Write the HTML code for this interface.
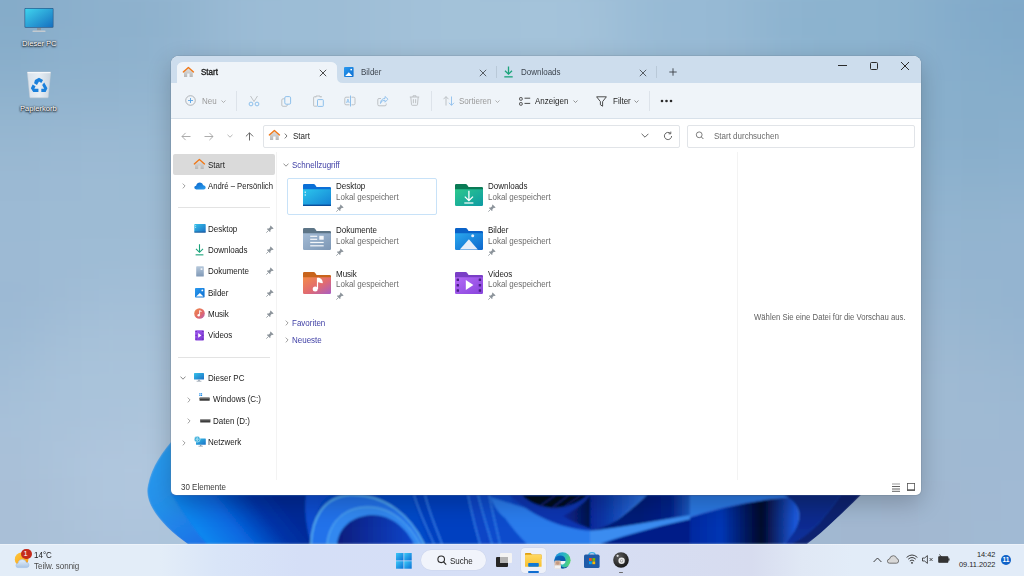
<!DOCTYPE html>
<html><head><meta charset="utf-8">
<style>
*{margin:0;padding:0;box-sizing:border-box}
html,body{width:1024px;height:576px;overflow:hidden}
body{position:relative;font-family:"Liberation Sans",sans-serif;color:#1b1b1b;font-size:8.6px;
background:
 radial-gradient(ellipse 420px 300px at 560px 80px, rgba(178,203,224,0.9), rgba(178,203,224,0) 100%),
 radial-gradient(ellipse 380px 420px at 1024px 560px, rgba(186,204,224,0.9), rgba(186,204,224,0) 100%),
 linear-gradient(90deg,#90b0cc 0%,#9fbcd5 45%,#8fb0cd 75%,#82a7c6 100%);}
.a{position:absolute}
.t{position:absolute;white-space:nowrap;line-height:1;transform:scaleX(0.93);transform-origin:0 0}
#bloom{position:absolute;left:0;top:0}
.win{position:absolute;left:171px;top:56px;width:750px;height:439px;border-radius:8px 8px 5px 5px;overflow:hidden;background:#fff;
 box-shadow:0 8px 24px rgba(0,0,0,0.22),0 0 0 1px rgba(120,140,160,0.25)}
.tabs{position:absolute;left:0;top:0;width:750px;height:27px;background:#cddded}
.tab{position:absolute;left:6px;top:5.5px;width:160px;height:21px;background:#eff4f9;border-radius:6px 6px 0 0}
.toolbar{position:absolute;left:0;top:27px;width:750px;height:36px;background:#eff4f9;border-bottom:1px solid #d8e1ea}
.sep{position:absolute;width:1px;background:#dde3ea}
.box{position:absolute;border:1px solid #e1e4e8;background:#fff;border-radius:2px}

.taskbar{position:absolute;left:0;top:544px;width:1024px;height:32px;background:linear-gradient(90deg,#e3edf8 0px,#e3edf8 160px,#d9e5f8 217px,#d5dff7 300px,#d6dff6 500px,#d7dcef 752px,#e0e8f5 802px,#e2ecf8 852px,#e2ecf8 1024px);border-top:1px solid rgba(255,255,255,0.35)}
.dlabel{color:#fff;transform:none!important;text-shadow:0 0 2px #000,0 1px 2px #000}
</style></head><body>

<!-- bgmesh --><div class="a" style="left:-80px;top:-80px;width:1184px;height:736px;filter:blur(20px)"><svg width="1184" height="736"><rect x="0" y="0" width="41" height="41" fill="#8aafcc"/><rect x="40" y="0" width="41" height="41" fill="#88aecb"/><rect x="80" y="0" width="41" height="41" fill="#88aecb"/><rect x="120" y="0" width="41" height="41" fill="#8bb0cc"/><rect x="160" y="0" width="41" height="41" fill="#8eb2ce"/><rect x="200" y="0" width="41" height="41" fill="#91b4cf"/><rect x="240" y="0" width="41" height="41" fill="#94b6d1"/><rect x="280" y="0" width="41" height="41" fill="#97b9d3"/><rect x="320" y="0" width="41" height="41" fill="#9abbd5"/><rect x="360" y="0" width="41" height="41" fill="#9cbcd5"/><rect x="400" y="0" width="41" height="41" fill="#9dbdd6"/><rect x="440" y="0" width="41" height="41" fill="#9fbfd7"/><rect x="480" y="0" width="41" height="41" fill="#a1c0d8"/><rect x="520" y="0" width="41" height="41" fill="#a1c1d8"/><rect x="560" y="0" width="41" height="41" fill="#a1c0d8"/><rect x="600" y="0" width="41" height="41" fill="#a1c0d8"/><rect x="640" y="0" width="41" height="41" fill="#9fbfd8"/><rect x="680" y="0" width="41" height="41" fill="#9cbdd6"/><rect x="720" y="0" width="41" height="41" fill="#99bbd5"/><rect x="760" y="0" width="41" height="41" fill="#97bad5"/><rect x="800" y="0" width="41" height="41" fill="#95b9d3"/><rect x="840" y="0" width="41" height="41" fill="#92b6d2"/><rect x="880" y="0" width="41" height="41" fill="#8fb5d0"/><rect x="920" y="0" width="41" height="41" fill="#8eb4d0"/><rect x="960" y="0" width="41" height="41" fill="#8cb2cf"/><rect x="1000" y="0" width="41" height="41" fill="#89b0cd"/><rect x="1040" y="0" width="41" height="41" fill="#86adcc"/><rect x="1080" y="0" width="41" height="41" fill="#84accb"/><rect x="1120" y="0" width="41" height="41" fill="#85adcb"/><rect x="1160" y="0" width="41" height="41" fill="#86aecc"/><rect x="0" y="40" width="41" height="41" fill="#88aecb"/><rect x="40" y="40" width="41" height="41" fill="#85acca"/><rect x="80" y="40" width="41" height="41" fill="#85acc9"/><rect x="120" y="40" width="41" height="41" fill="#89aecb"/><rect x="160" y="40" width="41" height="41" fill="#8db1cd"/><rect x="200" y="40" width="41" height="41" fill="#8fb2ce"/><rect x="240" y="40" width="41" height="41" fill="#92b5d0"/><rect x="280" y="40" width="41" height="41" fill="#97b9d3"/><rect x="320" y="40" width="41" height="41" fill="#9bbcd5"/><rect x="360" y="40" width="41" height="41" fill="#9cbdd6"/><rect x="400" y="40" width="41" height="41" fill="#9dbdd6"/><rect x="440" y="40" width="41" height="41" fill="#a0bfd7"/><rect x="480" y="40" width="41" height="41" fill="#a2c1d9"/><rect x="520" y="40" width="41" height="41" fill="#a3c2d9"/><rect x="560" y="40" width="41" height="41" fill="#a2c1d9"/><rect x="600" y="40" width="41" height="41" fill="#a3c2d9"/><rect x="640" y="40" width="41" height="41" fill="#a2c1d9"/><rect x="680" y="40" width="41" height="41" fill="#9dbdd7"/><rect x="720" y="40" width="41" height="41" fill="#98bad5"/><rect x="760" y="40" width="41" height="41" fill="#97bad5"/><rect x="800" y="40" width="41" height="41" fill="#95b9d4"/><rect x="840" y="40" width="41" height="41" fill="#90b5d1"/><rect x="880" y="40" width="41" height="41" fill="#8db4d0"/><rect x="920" y="40" width="41" height="41" fill="#8cb3cf"/><rect x="960" y="40" width="41" height="41" fill="#8bb2ce"/><rect x="1000" y="40" width="41" height="41" fill="#87aecc"/><rect x="1040" y="40" width="41" height="41" fill="#82abca"/><rect x="1080" y="40" width="41" height="41" fill="#81aaca"/><rect x="1120" y="40" width="41" height="41" fill="#82abca"/><rect x="1160" y="40" width="41" height="41" fill="#85accb"/><rect x="0" y="80" width="41" height="41" fill="#88aecb"/><rect x="40" y="80" width="41" height="41" fill="#85acc9"/><rect x="80" y="80" width="41" height="41" fill="#84abc9"/><rect x="120" y="80" width="41" height="41" fill="#8aafcc"/><rect x="160" y="80" width="41" height="41" fill="#8db1cd"/><rect x="200" y="80" width="41" height="41" fill="#8db1cd"/><rect x="240" y="80" width="41" height="41" fill="#91b4cf"/><rect x="280" y="80" width="41" height="41" fill="#98b9d3"/><rect x="320" y="80" width="41" height="41" fill="#9cbcd6"/><rect x="360" y="80" width="41" height="41" fill="#9cbdd6"/><rect x="400" y="80" width="41" height="41" fill="#9dbdd6"/><rect x="440" y="80" width="41" height="41" fill="#a0bfd7"/><rect x="480" y="80" width="41" height="41" fill="#a2c1d9"/><rect x="520" y="80" width="41" height="41" fill="#a3c2d9"/><rect x="560" y="80" width="41" height="41" fill="#a3c2d9"/><rect x="600" y="80" width="41" height="41" fill="#a4c3da"/><rect x="640" y="80" width="41" height="41" fill="#a4c3da"/><rect x="680" y="80" width="41" height="41" fill="#9dbed7"/><rect x="720" y="80" width="41" height="41" fill="#97bad5"/><rect x="760" y="80" width="41" height="41" fill="#97bad5"/><rect x="800" y="80" width="41" height="41" fill="#95b8d3"/><rect x="840" y="80" width="41" height="41" fill="#8eb4d0"/><rect x="880" y="80" width="41" height="41" fill="#8bb3cf"/><rect x="920" y="80" width="41" height="41" fill="#8cb3cf"/><rect x="960" y="80" width="41" height="41" fill="#8bb2ce"/><rect x="1000" y="80" width="41" height="41" fill="#86aecc"/><rect x="1040" y="80" width="41" height="41" fill="#81aaca"/><rect x="1080" y="80" width="41" height="41" fill="#7fa9c9"/><rect x="1120" y="80" width="41" height="41" fill="#81aaca"/><rect x="1160" y="80" width="41" height="41" fill="#84accb"/><rect x="0" y="120" width="41" height="41" fill="#8bb0cc"/><rect x="40" y="120" width="41" height="41" fill="#88aecb"/><rect x="80" y="120" width="41" height="41" fill="#89aecb"/><rect x="120" y="120" width="41" height="41" fill="#8db1cd"/><rect x="160" y="120" width="41" height="41" fill="#8eb1cd"/><rect x="200" y="120" width="41" height="41" fill="#8eb2ce"/><rect x="240" y="120" width="41" height="41" fill="#92b4d0"/><rect x="280" y="120" width="41" height="41" fill="#98b9d3"/><rect x="320" y="120" width="41" height="41" fill="#9bbcd5"/><rect x="360" y="120" width="41" height="41" fill="#9cbdd6"/><rect x="400" y="120" width="41" height="41" fill="#9dbdd6"/><rect x="440" y="120" width="41" height="41" fill="#a0bfd7"/><rect x="480" y="120" width="41" height="41" fill="#a2c0d8"/><rect x="520" y="120" width="41" height="41" fill="#a2c1d8"/><rect x="560" y="120" width="41" height="41" fill="#a2c1d9"/><rect x="600" y="120" width="41" height="41" fill="#a3c2d9"/><rect x="640" y="120" width="41" height="41" fill="#a2c1d9"/><rect x="680" y="120" width="41" height="41" fill="#9ebed7"/><rect x="720" y="120" width="41" height="41" fill="#99bbd5"/><rect x="760" y="120" width="41" height="41" fill="#98bad5"/><rect x="800" y="120" width="41" height="41" fill="#96b8d3"/><rect x="840" y="120" width="41" height="41" fill="#8fb5d1"/><rect x="880" y="120" width="41" height="41" fill="#8cb3cf"/><rect x="920" y="120" width="41" height="41" fill="#8cb3cf"/><rect x="960" y="120" width="41" height="41" fill="#8bb1ce"/><rect x="1000" y="120" width="41" height="41" fill="#87aecc"/><rect x="1040" y="120" width="41" height="41" fill="#85adcb"/><rect x="1080" y="120" width="41" height="41" fill="#82abca"/><rect x="1120" y="120" width="41" height="41" fill="#83abca"/><rect x="1160" y="120" width="41" height="41" fill="#86adcb"/><rect x="0" y="160" width="41" height="41" fill="#90b3cf"/><rect x="40" y="160" width="41" height="41" fill="#8fb2ce"/><rect x="80" y="160" width="41" height="41" fill="#90b3ce"/><rect x="120" y="160" width="41" height="41" fill="#92b4cf"/><rect x="160" y="160" width="41" height="41" fill="#92b4cf"/><rect x="200" y="160" width="41" height="41" fill="#93b5d0"/><rect x="240" y="160" width="41" height="41" fill="#95b7d1"/><rect x="280" y="160" width="41" height="41" fill="#99b9d3"/><rect x="320" y="160" width="41" height="41" fill="#9cbcd5"/><rect x="360" y="160" width="41" height="41" fill="#9dbdd6"/><rect x="400" y="160" width="41" height="41" fill="#9fbed6"/><rect x="440" y="160" width="41" height="41" fill="#a1bfd7"/><rect x="480" y="160" width="41" height="41" fill="#a1bfd7"/><rect x="520" y="160" width="41" height="41" fill="#a1c0d8"/><rect x="560" y="160" width="41" height="41" fill="#a2c0d8"/><rect x="600" y="160" width="41" height="41" fill="#a1c0d8"/><rect x="640" y="160" width="41" height="41" fill="#a0bfd8"/><rect x="680" y="160" width="41" height="41" fill="#9ebdd6"/><rect x="720" y="160" width="41" height="41" fill="#9bbbd5"/><rect x="760" y="160" width="41" height="41" fill="#9bbad4"/><rect x="800" y="160" width="41" height="41" fill="#99b9d4"/><rect x="840" y="160" width="41" height="41" fill="#94b7d2"/><rect x="880" y="160" width="41" height="41" fill="#90b5d0"/><rect x="920" y="160" width="41" height="41" fill="#8eb4cf"/><rect x="960" y="160" width="41" height="41" fill="#8bb1ce"/><rect x="1000" y="160" width="41" height="41" fill="#88afcc"/><rect x="1040" y="160" width="41" height="41" fill="#87aecb"/><rect x="1080" y="160" width="41" height="41" fill="#87aecb"/><rect x="1120" y="160" width="41" height="41" fill="#87aecb"/><rect x="1160" y="160" width="41" height="41" fill="#88afcc"/><rect x="0" y="200" width="41" height="41" fill="#96b6d1"/><rect x="40" y="200" width="41" height="41" fill="#96b6d1"/><rect x="80" y="200" width="41" height="41" fill="#97b7d1"/><rect x="120" y="200" width="41" height="41" fill="#99b8d2"/><rect x="160" y="200" width="41" height="41" fill="#9ab9d3"/><rect x="200" y="200" width="41" height="41" fill="#99b9d3"/><rect x="240" y="200" width="41" height="41" fill="#99b9d3"/><rect x="280" y="200" width="41" height="41" fill="#9bbad4"/><rect x="320" y="200" width="41" height="41" fill="#9dbcd5"/><rect x="360" y="200" width="41" height="41" fill="#9ebdd6"/><rect x="400" y="200" width="41" height="41" fill="#a1bed7"/><rect x="440" y="200" width="41" height="41" fill="#a2bfd7"/><rect x="480" y="200" width="41" height="41" fill="#a2bfd7"/><rect x="520" y="200" width="41" height="41" fill="#a2bfd7"/><rect x="560" y="200" width="41" height="41" fill="#a2bfd8"/><rect x="600" y="200" width="41" height="41" fill="#a2bfd8"/><rect x="640" y="200" width="41" height="41" fill="#a0bed7"/><rect x="680" y="200" width="41" height="41" fill="#9ebcd6"/><rect x="720" y="200" width="41" height="41" fill="#9cbad4"/><rect x="760" y="200" width="41" height="41" fill="#9cbad4"/><rect x="800" y="200" width="41" height="41" fill="#9bbad4"/><rect x="840" y="200" width="41" height="41" fill="#98b8d3"/><rect x="880" y="200" width="41" height="41" fill="#94b6d1"/><rect x="920" y="200" width="41" height="41" fill="#91b4d0"/><rect x="960" y="200" width="41" height="41" fill="#8db2ce"/><rect x="1000" y="200" width="41" height="41" fill="#89afcc"/><rect x="1040" y="200" width="41" height="41" fill="#88aecb"/><rect x="1080" y="200" width="41" height="41" fill="#89afcc"/><rect x="1120" y="200" width="41" height="41" fill="#8aafcc"/><rect x="1160" y="200" width="41" height="41" fill="#8cb0cd"/><rect x="0" y="240" width="41" height="41" fill="#9ab8d3"/><rect x="40" y="240" width="41" height="41" fill="#9ab9d3"/><rect x="80" y="240" width="41" height="41" fill="#9bb9d3"/><rect x="120" y="240" width="41" height="41" fill="#9cbad4"/><rect x="160" y="240" width="41" height="41" fill="#9dbbd4"/><rect x="200" y="240" width="41" height="41" fill="#9cbbd4"/><rect x="240" y="240" width="41" height="41" fill="#9cbbd4"/><rect x="280" y="240" width="41" height="41" fill="#9cbbd4"/><rect x="320" y="240" width="41" height="41" fill="#9ebcd5"/><rect x="360" y="240" width="41" height="41" fill="#9fbdd6"/><rect x="400" y="240" width="41" height="41" fill="#a1bed7"/><rect x="440" y="240" width="41" height="41" fill="#a2bfd7"/><rect x="480" y="240" width="41" height="41" fill="#a2bfd7"/><rect x="520" y="240" width="41" height="41" fill="#a2bfd7"/><rect x="560" y="240" width="41" height="41" fill="#a3c0d8"/><rect x="600" y="240" width="41" height="41" fill="#a4c0d8"/><rect x="640" y="240" width="41" height="41" fill="#a3c0d8"/><rect x="680" y="240" width="41" height="41" fill="#a0bdd6"/><rect x="720" y="240" width="41" height="41" fill="#9dbbd5"/><rect x="760" y="240" width="41" height="41" fill="#9cbad4"/><rect x="800" y="240" width="41" height="41" fill="#9bbad4"/><rect x="840" y="240" width="41" height="41" fill="#99b9d3"/><rect x="880" y="240" width="41" height="41" fill="#96b7d2"/><rect x="920" y="240" width="41" height="41" fill="#93b5d1"/><rect x="960" y="240" width="41" height="41" fill="#90b3cf"/><rect x="1000" y="240" width="41" height="41" fill="#8eb2ce"/><rect x="1040" y="240" width="41" height="41" fill="#8db1cd"/><rect x="1080" y="240" width="41" height="41" fill="#8db1ce"/><rect x="1120" y="240" width="41" height="41" fill="#8eb2ce"/><rect x="1160" y="240" width="41" height="41" fill="#8fb2ce"/><rect x="0" y="280" width="41" height="41" fill="#9cbad4"/><rect x="40" y="280" width="41" height="41" fill="#9cbad4"/><rect x="80" y="280" width="41" height="41" fill="#9cbad4"/><rect x="120" y="280" width="41" height="41" fill="#9dbbd4"/><rect x="160" y="280" width="41" height="41" fill="#9dbbd4"/><rect x="200" y="280" width="41" height="41" fill="#9dbbd4"/><rect x="240" y="280" width="41" height="41" fill="#9dbbd4"/><rect x="280" y="280" width="41" height="41" fill="#9ebcd5"/><rect x="320" y="280" width="41" height="41" fill="#9fbdd6"/><rect x="360" y="280" width="41" height="41" fill="#a0bed6"/><rect x="400" y="280" width="41" height="41" fill="#a1bed7"/><rect x="440" y="280" width="41" height="41" fill="#a2bfd7"/><rect x="480" y="280" width="41" height="41" fill="#a2bfd7"/><rect x="520" y="280" width="41" height="41" fill="#a3bfd8"/><rect x="560" y="280" width="41" height="41" fill="#a5c1d9"/><rect x="600" y="280" width="41" height="41" fill="#a7c2da"/><rect x="640" y="280" width="41" height="41" fill="#a7c1da"/><rect x="680" y="280" width="41" height="41" fill="#a4bfd8"/><rect x="720" y="280" width="41" height="41" fill="#9fbdd6"/><rect x="760" y="280" width="41" height="41" fill="#9dbbd5"/><rect x="800" y="280" width="41" height="41" fill="#9cbad4"/><rect x="840" y="280" width="41" height="41" fill="#9ab9d3"/><rect x="880" y="280" width="41" height="41" fill="#98b8d2"/><rect x="920" y="280" width="41" height="41" fill="#96b6d1"/><rect x="960" y="280" width="41" height="41" fill="#94b5d0"/><rect x="1000" y="280" width="41" height="41" fill="#92b4d0"/><rect x="1040" y="280" width="41" height="41" fill="#92b4cf"/><rect x="1080" y="280" width="41" height="41" fill="#93b4d0"/><rect x="1120" y="280" width="41" height="41" fill="#92b3cf"/><rect x="1160" y="280" width="41" height="41" fill="#92b3cf"/><rect x="0" y="320" width="41" height="41" fill="#9dbad4"/><rect x="40" y="320" width="41" height="41" fill="#9dbad4"/><rect x="80" y="320" width="41" height="41" fill="#9dbad4"/><rect x="120" y="320" width="41" height="41" fill="#9ebbd5"/><rect x="160" y="320" width="41" height="41" fill="#9ebcd5"/><rect x="200" y="320" width="41" height="41" fill="#9fbcd5"/><rect x="240" y="320" width="41" height="41" fill="#9fbcd5"/><rect x="280" y="320" width="41" height="41" fill="#a0bdd6"/><rect x="320" y="320" width="41" height="41" fill="#a0bdd6"/><rect x="360" y="320" width="41" height="41" fill="#a1bed6"/><rect x="400" y="320" width="41" height="41" fill="#a1bed7"/><rect x="440" y="320" width="41" height="41" fill="#a2bfd7"/><rect x="480" y="320" width="41" height="41" fill="#a3bfd8"/><rect x="520" y="320" width="41" height="41" fill="#a4c0d8"/><rect x="560" y="320" width="41" height="41" fill="#a6c1d9"/><rect x="600" y="320" width="41" height="41" fill="#a8c2da"/><rect x="640" y="320" width="41" height="41" fill="#a8c2da"/><rect x="680" y="320" width="41" height="41" fill="#a5c0d9"/><rect x="720" y="320" width="41" height="41" fill="#a2bed7"/><rect x="760" y="320" width="41" height="41" fill="#9fbcd6"/><rect x="800" y="320" width="41" height="41" fill="#9dbbd5"/><rect x="840" y="320" width="41" height="41" fill="#9bbad4"/><rect x="880" y="320" width="41" height="41" fill="#99b8d3"/><rect x="920" y="320" width="41" height="41" fill="#98b7d2"/><rect x="960" y="320" width="41" height="41" fill="#96b6d1"/><rect x="1000" y="320" width="41" height="41" fill="#95b5d0"/><rect x="1040" y="320" width="41" height="41" fill="#94b4d0"/><rect x="1080" y="320" width="41" height="41" fill="#94b4d0"/><rect x="1120" y="320" width="41" height="41" fill="#94b4d0"/><rect x="1160" y="320" width="41" height="41" fill="#94b4d0"/><rect x="0" y="360" width="41" height="41" fill="#9dbad5"/><rect x="40" y="360" width="41" height="41" fill="#9cb9d4"/><rect x="80" y="360" width="41" height="41" fill="#9cb9d4"/><rect x="120" y="360" width="41" height="41" fill="#9fbbd5"/><rect x="160" y="360" width="41" height="41" fill="#a2bed7"/><rect x="200" y="360" width="41" height="41" fill="#a2bed7"/><rect x="240" y="360" width="41" height="41" fill="#a2bed7"/><rect x="280" y="360" width="41" height="41" fill="#a2bed7"/><rect x="320" y="360" width="41" height="41" fill="#a2bed7"/><rect x="360" y="360" width="41" height="41" fill="#a2bed7"/><rect x="400" y="360" width="41" height="41" fill="#a2bfd7"/><rect x="440" y="360" width="41" height="41" fill="#a3bfd7"/><rect x="480" y="360" width="41" height="41" fill="#a4c0d8"/><rect x="520" y="360" width="41" height="41" fill="#a5c0d9"/><rect x="560" y="360" width="41" height="41" fill="#a7c1d9"/><rect x="600" y="360" width="41" height="41" fill="#a7c2da"/><rect x="640" y="360" width="41" height="41" fill="#a7c1da"/><rect x="680" y="360" width="41" height="41" fill="#a6c0d9"/><rect x="720" y="360" width="41" height="41" fill="#a3bfd7"/><rect x="760" y="360" width="41" height="41" fill="#a0bdd6"/><rect x="800" y="360" width="41" height="41" fill="#9ebbd5"/><rect x="840" y="360" width="41" height="41" fill="#9cbad4"/><rect x="880" y="360" width="41" height="41" fill="#9bb9d3"/><rect x="920" y="360" width="41" height="41" fill="#9ab8d2"/><rect x="960" y="360" width="41" height="41" fill="#99b7d2"/><rect x="1000" y="360" width="41" height="41" fill="#98b6d1"/><rect x="1040" y="360" width="41" height="41" fill="#95b5d0"/><rect x="1080" y="360" width="41" height="41" fill="#94b4d0"/><rect x="1120" y="360" width="41" height="41" fill="#95b4d0"/><rect x="1160" y="360" width="41" height="41" fill="#95b5d0"/><rect x="0" y="400" width="41" height="41" fill="#9fbbd5"/><rect x="40" y="400" width="41" height="41" fill="#9ebad5"/><rect x="80" y="400" width="41" height="41" fill="#9ebbd5"/><rect x="120" y="400" width="41" height="41" fill="#a4bfd8"/><rect x="160" y="400" width="41" height="41" fill="#a7c2d9"/><rect x="200" y="400" width="41" height="41" fill="#a7c1d9"/><rect x="240" y="400" width="41" height="41" fill="#a5c0d8"/><rect x="280" y="400" width="41" height="41" fill="#a4c0d8"/><rect x="320" y="400" width="41" height="41" fill="#a3bfd8"/><rect x="360" y="400" width="41" height="41" fill="#a3bfd7"/><rect x="400" y="400" width="41" height="41" fill="#a3bfd7"/><rect x="440" y="400" width="41" height="41" fill="#a4bfd8"/><rect x="480" y="400" width="41" height="41" fill="#a5c0d8"/><rect x="520" y="400" width="41" height="41" fill="#a7c1d9"/><rect x="560" y="400" width="41" height="41" fill="#a8c2da"/><rect x="600" y="400" width="41" height="41" fill="#aac3da"/><rect x="640" y="400" width="41" height="41" fill="#a9c2da"/><rect x="680" y="400" width="41" height="41" fill="#a8c1d9"/><rect x="720" y="400" width="41" height="41" fill="#a5c0d8"/><rect x="760" y="400" width="41" height="41" fill="#a2bed7"/><rect x="800" y="400" width="41" height="41" fill="#9fbcd5"/><rect x="840" y="400" width="41" height="41" fill="#9ebad4"/><rect x="880" y="400" width="41" height="41" fill="#9db9d3"/><rect x="920" y="400" width="41" height="41" fill="#9cb9d2"/><rect x="960" y="400" width="41" height="41" fill="#9cb9d2"/><rect x="1000" y="400" width="41" height="41" fill="#9cb8d2"/><rect x="1040" y="400" width="41" height="41" fill="#99b7d1"/><rect x="1080" y="400" width="41" height="41" fill="#97b5d1"/><rect x="1120" y="400" width="41" height="41" fill="#97b5d1"/><rect x="1160" y="400" width="41" height="41" fill="#97b6d1"/><rect x="0" y="440" width="41" height="41" fill="#a2bdd6"/><rect x="40" y="440" width="41" height="41" fill="#a2bdd6"/><rect x="80" y="440" width="41" height="41" fill="#a4bfd8"/><rect x="120" y="440" width="41" height="41" fill="#a8c2da"/><rect x="160" y="440" width="41" height="41" fill="#a9c3da"/><rect x="200" y="440" width="41" height="41" fill="#a9c3da"/><rect x="240" y="440" width="41" height="41" fill="#a8c2da"/><rect x="280" y="440" width="41" height="41" fill="#a7c1d9"/><rect x="320" y="440" width="41" height="41" fill="#a5c0d8"/><rect x="360" y="440" width="41" height="41" fill="#a4c0d8"/><rect x="400" y="440" width="41" height="41" fill="#a4bfd8"/><rect x="440" y="440" width="41" height="41" fill="#a5c0d8"/><rect x="480" y="440" width="41" height="41" fill="#a6c1d9"/><rect x="520" y="440" width="41" height="41" fill="#a9c2da"/><rect x="560" y="440" width="41" height="41" fill="#acc4db"/><rect x="600" y="440" width="41" height="41" fill="#aec5dc"/><rect x="640" y="440" width="41" height="41" fill="#aec5dc"/><rect x="680" y="440" width="41" height="41" fill="#abc3db"/><rect x="720" y="440" width="41" height="41" fill="#a7c1d9"/><rect x="760" y="440" width="41" height="41" fill="#a3bed7"/><rect x="800" y="440" width="41" height="41" fill="#a1bcd5"/><rect x="840" y="440" width="41" height="41" fill="#9fbad4"/><rect x="880" y="440" width="41" height="41" fill="#9eb9d3"/><rect x="920" y="440" width="41" height="41" fill="#9eb9d3"/><rect x="960" y="440" width="41" height="41" fill="#9ebad3"/><rect x="1000" y="440" width="41" height="41" fill="#9fbad3"/><rect x="1040" y="440" width="41" height="41" fill="#9eb9d3"/><rect x="1080" y="440" width="41" height="41" fill="#9bb8d2"/><rect x="1120" y="440" width="41" height="41" fill="#9ab7d2"/><rect x="1160" y="440" width="41" height="41" fill="#9ab7d2"/><rect x="0" y="480" width="41" height="41" fill="#a5bed7"/><rect x="40" y="480" width="41" height="41" fill="#a6bfd8"/><rect x="80" y="480" width="41" height="41" fill="#a7c1d9"/><rect x="120" y="480" width="41" height="41" fill="#a9c2da"/><rect x="160" y="480" width="41" height="41" fill="#aac3db"/><rect x="200" y="480" width="41" height="41" fill="#acc4db"/><rect x="240" y="480" width="41" height="41" fill="#abc4db"/><rect x="280" y="480" width="41" height="41" fill="#a9c2da"/><rect x="320" y="480" width="41" height="41" fill="#a7c1d9"/><rect x="360" y="480" width="41" height="41" fill="#a6c0d8"/><rect x="400" y="480" width="41" height="41" fill="#a5c0d8"/><rect x="440" y="480" width="41" height="41" fill="#a6c0d8"/><rect x="480" y="480" width="41" height="41" fill="#a7c1d9"/><rect x="520" y="480" width="41" height="41" fill="#aac3da"/><rect x="560" y="480" width="41" height="41" fill="#adc5dc"/><rect x="600" y="480" width="41" height="41" fill="#b0c6dd"/><rect x="640" y="480" width="41" height="41" fill="#b0c6dd"/><rect x="680" y="480" width="41" height="41" fill="#adc4dc"/><rect x="720" y="480" width="41" height="41" fill="#a9c1d9"/><rect x="760" y="480" width="41" height="41" fill="#a4bed7"/><rect x="800" y="480" width="41" height="41" fill="#a1bcd5"/><rect x="840" y="480" width="41" height="41" fill="#a0bad4"/><rect x="880" y="480" width="41" height="41" fill="#9fb9d3"/><rect x="920" y="480" width="41" height="41" fill="#9fb9d2"/><rect x="960" y="480" width="41" height="41" fill="#9fbad3"/><rect x="1000" y="480" width="41" height="41" fill="#9fbad3"/><rect x="1040" y="480" width="41" height="41" fill="#9fbad3"/><rect x="1080" y="480" width="41" height="41" fill="#9eb9d3"/><rect x="1120" y="480" width="41" height="41" fill="#9db8d2"/><rect x="1160" y="480" width="41" height="41" fill="#9cb8d2"/><rect x="0" y="520" width="41" height="41" fill="#a7bfd7"/><rect x="40" y="520" width="41" height="41" fill="#a8c0d8"/><rect x="80" y="520" width="41" height="41" fill="#a9c0d8"/><rect x="120" y="520" width="41" height="41" fill="#acc3db"/><rect x="160" y="520" width="41" height="41" fill="#b0c6dd"/><rect x="200" y="520" width="41" height="41" fill="#b0c7de"/><rect x="240" y="520" width="41" height="41" fill="#aec5dc"/><rect x="280" y="520" width="41" height="41" fill="#abc3db"/><rect x="320" y="520" width="41" height="41" fill="#a8c2da"/><rect x="360" y="520" width="41" height="41" fill="#a6c1d9"/><rect x="400" y="520" width="41" height="41" fill="#a6c0d8"/><rect x="440" y="520" width="41" height="41" fill="#a6c0d9"/><rect x="480" y="520" width="41" height="41" fill="#a7c1d9"/><rect x="520" y="520" width="41" height="41" fill="#aac3da"/><rect x="560" y="520" width="41" height="41" fill="#adc4dc"/><rect x="600" y="520" width="41" height="41" fill="#afc5dc"/><rect x="640" y="520" width="41" height="41" fill="#afc5dc"/><rect x="680" y="520" width="41" height="41" fill="#acc4db"/><rect x="720" y="520" width="41" height="41" fill="#a8c1d9"/><rect x="760" y="520" width="41" height="41" fill="#a4bed7"/><rect x="800" y="520" width="41" height="41" fill="#a2bcd5"/><rect x="840" y="520" width="41" height="41" fill="#a0bad3"/><rect x="880" y="520" width="41" height="41" fill="#a0b9d2"/><rect x="920" y="520" width="41" height="41" fill="#a0b8d2"/><rect x="960" y="520" width="41" height="41" fill="#a0b8d2"/><rect x="1000" y="520" width="41" height="41" fill="#a0b9d2"/><rect x="1040" y="520" width="41" height="41" fill="#9fb9d3"/><rect x="1080" y="520" width="41" height="41" fill="#a0b9d3"/><rect x="1120" y="520" width="41" height="41" fill="#9fb9d3"/><rect x="1160" y="520" width="41" height="41" fill="#9eb9d3"/><rect x="0" y="560" width="41" height="41" fill="#a8bfd7"/><rect x="40" y="560" width="41" height="41" fill="#a9bfd7"/><rect x="80" y="560" width="41" height="41" fill="#a9bfd7"/><rect x="120" y="560" width="41" height="41" fill="#abc2d9"/><rect x="160" y="560" width="41" height="41" fill="#afc6dd"/><rect x="200" y="560" width="41" height="41" fill="#b0c6dd"/><rect x="240" y="560" width="41" height="41" fill="#aec5dc"/><rect x="280" y="560" width="41" height="41" fill="#abc3db"/><rect x="320" y="560" width="41" height="41" fill="#a9c2da"/><rect x="360" y="560" width="41" height="41" fill="#a7c1d9"/><rect x="400" y="560" width="41" height="41" fill="#a6c0d9"/><rect x="440" y="560" width="41" height="41" fill="#a6c0d9"/><rect x="480" y="560" width="41" height="41" fill="#a7c1d9"/><rect x="520" y="560" width="41" height="41" fill="#a9c2da"/><rect x="560" y="560" width="41" height="41" fill="#abc3db"/><rect x="600" y="560" width="41" height="41" fill="#acc4db"/><rect x="640" y="560" width="41" height="41" fill="#acc4db"/><rect x="680" y="560" width="41" height="41" fill="#aac2da"/><rect x="720" y="560" width="41" height="41" fill="#a7c0d8"/><rect x="760" y="560" width="41" height="41" fill="#a4bed6"/><rect x="800" y="560" width="41" height="41" fill="#a2bbd4"/><rect x="840" y="560" width="41" height="41" fill="#a1bad3"/><rect x="880" y="560" width="41" height="41" fill="#a1b8d2"/><rect x="920" y="560" width="41" height="41" fill="#a1b8d1"/><rect x="960" y="560" width="41" height="41" fill="#a2b7d0"/><rect x="1000" y="560" width="41" height="41" fill="#a1b8d1"/><rect x="1040" y="560" width="41" height="41" fill="#a1b9d3"/><rect x="1080" y="560" width="41" height="41" fill="#a1bad4"/><rect x="1120" y="560" width="41" height="41" fill="#a0bad4"/><rect x="1160" y="560" width="41" height="41" fill="#9fb9d3"/><rect x="0" y="600" width="41" height="41" fill="#a8bfd7"/><rect x="40" y="600" width="41" height="41" fill="#a9bfd7"/><rect x="80" y="600" width="41" height="41" fill="#a9bfd7"/><rect x="120" y="600" width="41" height="41" fill="#aac1d8"/><rect x="160" y="600" width="41" height="41" fill="#adc3db"/><rect x="200" y="600" width="41" height="41" fill="#adc4dc"/><rect x="240" y="600" width="41" height="41" fill="#acc4db"/><rect x="280" y="600" width="41" height="41" fill="#aac3da"/><rect x="320" y="600" width="41" height="41" fill="#a8c2da"/><rect x="360" y="600" width="41" height="41" fill="#a7c1d9"/><rect x="400" y="600" width="41" height="41" fill="#a6c0d8"/><rect x="440" y="600" width="41" height="41" fill="#a6c0d8"/><rect x="480" y="600" width="41" height="41" fill="#a6c0d9"/><rect x="520" y="600" width="41" height="41" fill="#a8c1d9"/><rect x="560" y="600" width="41" height="41" fill="#a9c2da"/><rect x="600" y="600" width="41" height="41" fill="#a9c2da"/><rect x="640" y="600" width="41" height="41" fill="#a9c2da"/><rect x="680" y="600" width="41" height="41" fill="#a8c1d9"/><rect x="720" y="600" width="41" height="41" fill="#a5bfd7"/><rect x="760" y="600" width="41" height="41" fill="#a3bdd6"/><rect x="800" y="600" width="41" height="41" fill="#a2bbd4"/><rect x="840" y="600" width="41" height="41" fill="#a1b9d3"/><rect x="880" y="600" width="41" height="41" fill="#a1b8d1"/><rect x="920" y="600" width="41" height="41" fill="#a2b7d0"/><rect x="960" y="600" width="41" height="41" fill="#a2b7d0"/><rect x="1000" y="600" width="41" height="41" fill="#a2b8d1"/><rect x="1040" y="600" width="41" height="41" fill="#a1bad3"/><rect x="1080" y="600" width="41" height="41" fill="#a1bad4"/><rect x="1120" y="600" width="41" height="41" fill="#a1bad4"/><rect x="1160" y="600" width="41" height="41" fill="#a0b9d3"/><rect x="0" y="640" width="41" height="41" fill="#a8bfd7"/><rect x="40" y="640" width="41" height="41" fill="#a9bfd7"/><rect x="80" y="640" width="41" height="41" fill="#a9c0d8"/><rect x="120" y="640" width="41" height="41" fill="#aac0d8"/><rect x="160" y="640" width="41" height="41" fill="#abc2da"/><rect x="200" y="640" width="41" height="41" fill="#abc3da"/><rect x="240" y="640" width="41" height="41" fill="#aac3da"/><rect x="280" y="640" width="41" height="41" fill="#a9c2da"/><rect x="320" y="640" width="41" height="41" fill="#a8c1d9"/><rect x="360" y="640" width="41" height="41" fill="#a7c0d9"/><rect x="400" y="640" width="41" height="41" fill="#a6c0d8"/><rect x="440" y="640" width="41" height="41" fill="#a6c0d8"/><rect x="480" y="640" width="41" height="41" fill="#a6c0d8"/><rect x="520" y="640" width="41" height="41" fill="#a6c0d8"/><rect x="560" y="640" width="41" height="41" fill="#a7c0d9"/><rect x="600" y="640" width="41" height="41" fill="#a7c0d9"/><rect x="640" y="640" width="41" height="41" fill="#a7c0d8"/><rect x="680" y="640" width="41" height="41" fill="#a6bfd8"/><rect x="720" y="640" width="41" height="41" fill="#a4bed7"/><rect x="760" y="640" width="41" height="41" fill="#a3bcd5"/><rect x="800" y="640" width="41" height="41" fill="#a1bbd4"/><rect x="840" y="640" width="41" height="41" fill="#a1b9d3"/><rect x="880" y="640" width="41" height="41" fill="#a1b8d2"/><rect x="920" y="640" width="41" height="41" fill="#a1b8d1"/><rect x="960" y="640" width="41" height="41" fill="#a1b8d1"/><rect x="1000" y="640" width="41" height="41" fill="#a1b8d1"/><rect x="1040" y="640" width="41" height="41" fill="#a1b9d3"/><rect x="1080" y="640" width="41" height="41" fill="#a1bad4"/><rect x="1120" y="640" width="41" height="41" fill="#a0bad4"/><rect x="1160" y="640" width="41" height="41" fill="#a0b9d3"/><rect x="0" y="680" width="41" height="41" fill="#a8bfd8"/><rect x="40" y="680" width="41" height="41" fill="#a8c0d8"/><rect x="80" y="680" width="41" height="41" fill="#a9c0d8"/><rect x="120" y="680" width="41" height="41" fill="#a9c0d8"/><rect x="160" y="680" width="41" height="41" fill="#a9c1d9"/><rect x="200" y="680" width="41" height="41" fill="#a9c2d9"/><rect x="240" y="680" width="41" height="41" fill="#a9c2d9"/><rect x="280" y="680" width="41" height="41" fill="#a8c1d9"/><rect x="320" y="680" width="41" height="41" fill="#a7c1d9"/><rect x="360" y="680" width="41" height="41" fill="#a6c0d8"/><rect x="400" y="680" width="41" height="41" fill="#a6c0d8"/><rect x="440" y="680" width="41" height="41" fill="#a5c0d8"/><rect x="480" y="680" width="41" height="41" fill="#a5bfd8"/><rect x="520" y="680" width="41" height="41" fill="#a5c0d8"/><rect x="560" y="680" width="41" height="41" fill="#a5c0d8"/><rect x="600" y="680" width="41" height="41" fill="#a5bfd8"/><rect x="640" y="680" width="41" height="41" fill="#a5bfd7"/><rect x="680" y="680" width="41" height="41" fill="#a4bed7"/><rect x="720" y="680" width="41" height="41" fill="#a3bdd6"/><rect x="760" y="680" width="41" height="41" fill="#a2bcd5"/><rect x="800" y="680" width="41" height="41" fill="#a1bbd4"/><rect x="840" y="680" width="41" height="41" fill="#a1bad3"/><rect x="880" y="680" width="41" height="41" fill="#a1b9d2"/><rect x="920" y="680" width="41" height="41" fill="#a1b8d2"/><rect x="960" y="680" width="41" height="41" fill="#a1b8d1"/><rect x="1000" y="680" width="41" height="41" fill="#a1b8d2"/><rect x="1040" y="680" width="41" height="41" fill="#a0b9d3"/><rect x="1080" y="680" width="41" height="41" fill="#a0b9d3"/><rect x="1120" y="680" width="41" height="41" fill="#a0b9d3"/><rect x="1160" y="680" width="41" height="41" fill="#9fb9d3"/><rect x="0" y="720" width="41" height="41" fill="#a7bfd8"/><rect x="40" y="720" width="41" height="41" fill="#a8c0d8"/><rect x="80" y="720" width="41" height="41" fill="#a8c0d8"/><rect x="120" y="720" width="41" height="41" fill="#a8c0d8"/><rect x="160" y="720" width="41" height="41" fill="#a8c1d9"/><rect x="200" y="720" width="41" height="41" fill="#a8c1d9"/><rect x="240" y="720" width="41" height="41" fill="#a8c1d9"/><rect x="280" y="720" width="41" height="41" fill="#a7c1d9"/><rect x="320" y="720" width="41" height="41" fill="#a6c0d8"/><rect x="360" y="720" width="41" height="41" fill="#a6c0d8"/><rect x="400" y="720" width="41" height="41" fill="#a5bfd8"/><rect x="440" y="720" width="41" height="41" fill="#a5bfd8"/><rect x="480" y="720" width="41" height="41" fill="#a5bfd8"/><rect x="520" y="720" width="41" height="41" fill="#a4bfd7"/><rect x="560" y="720" width="41" height="41" fill="#a4bfd7"/><rect x="600" y="720" width="41" height="41" fill="#a4bfd7"/><rect x="640" y="720" width="41" height="41" fill="#a4bed7"/><rect x="680" y="720" width="41" height="41" fill="#a3bdd6"/><rect x="720" y="720" width="41" height="41" fill="#a2bdd6"/><rect x="760" y="720" width="41" height="41" fill="#a2bcd5"/><rect x="800" y="720" width="41" height="41" fill="#a1bbd4"/><rect x="840" y="720" width="41" height="41" fill="#a1bad3"/><rect x="880" y="720" width="41" height="41" fill="#a0b9d3"/><rect x="920" y="720" width="41" height="41" fill="#a0b9d2"/><rect x="960" y="720" width="41" height="41" fill="#a0b9d2"/><rect x="1000" y="720" width="41" height="41" fill="#a0b9d2"/><rect x="1040" y="720" width="41" height="41" fill="#a0b9d3"/><rect x="1080" y="720" width="41" height="41" fill="#a0b9d3"/><rect x="1120" y="720" width="41" height="41" fill="#a0b9d3"/><rect x="1160" y="720" width="41" height="41" fill="#9fb9d3"/></svg></div><!-- /bgmesh -->
<!-- bloom wallpaper -->
<svg id="bloom" width="1024" height="576" viewBox="0 0 1024 576">
 <defs>
  <linearGradient id="bl1" x1="150" y1="0" x2="860" y2="0" gradientUnits="userSpaceOnUse">
   <stop offset="0" stop-color="#1a70ea"/><stop offset="0.15" stop-color="#0d50d4"/>
   <stop offset="0.6" stop-color="#0b3fc0"/><stop offset="1" stop-color="#082a88"/>
  </linearGradient>
  <linearGradient id="blA" x1="148" y1="450" x2="210" y2="544" gradientUnits="userSpaceOnUse">
   <stop offset="0" stop-color="#2a9cf0"/><stop offset="0.5" stop-color="#2490ea"/><stop offset="1" stop-color="#1a6ee6"/>
  </linearGradient>
  <linearGradient id="blB" x1="205" y1="548" x2="275" y2="492" gradientUnits="userSpaceOnUse">
   <stop offset="0" stop-color="#0a8cf2"/><stop offset="0.4" stop-color="#0868e0"/><stop offset="0.75" stop-color="#0034a8"/><stop offset="1" stop-color="#002a98"/>
  </linearGradient>
  <linearGradient id="blN" x1="340" y1="0" x2="420" y2="0" gradientUnits="userSpaceOnUse">
   <stop offset="0" stop-color="#071e80"/><stop offset="1" stop-color="#0d48d0"/>
  </linearGradient>
  <linearGradient id="blC" x1="590" y1="0" x2="640" y2="0" gradientUnits="userSpaceOnUse">
   <stop offset="0" stop-color="#06289a"/><stop offset="0.3" stop-color="#0a38a8"/><stop offset="1" stop-color="#2a6ee0"/>
  </linearGradient>
  <linearGradient id="blE" x1="640" y1="0" x2="700" y2="0" gradientUnits="userSpaceOnUse">
   <stop offset="0" stop-color="#021a78"/><stop offset="0.5" stop-color="#02228a"/><stop offset="1" stop-color="#2a78e0"/>
  </linearGradient>
  <linearGradient id="blD" x1="690" y1="0" x2="795" y2="0" gradientUnits="userSpaceOnUse">
   <stop offset="0" stop-color="#0228a0"/><stop offset="0.3" stop-color="#0236b4"/><stop offset="0.68" stop-color="#02062a"/><stop offset="1" stop-color="#1a56d8"/>
  </linearGradient>
  <linearGradient id="blG" x1="0" y1="495" x2="0" y2="544" gradientUnits="userSpaceOnUse">
   <stop offset="0" stop-color="#0a2a80"/><stop offset="1" stop-color="#0d2e9c"/>
  </linearGradient>
  <linearGradient id="blK" x1="560" y1="0" x2="600" y2="0" gradientUnits="userSpaceOnUse">
   <stop offset="0" stop-color="#0a2ea8"/><stop offset="1" stop-color="#020828"/>
  </linearGradient>
  <radialGradient id="sliv" cx="0.5" cy="1" r="0.6"><stop offset="0" stop-color="#3a8ee0"/><stop offset="1" stop-color="#3a8ee0" stop-opacity="0"/></radialGradient>
 <clipPath id="bclip"><path d="M188 544 C165 528 143 505 148 485 C152 466 162 452 176 436 L200 380 L880 380 L861 495 C840 515 822 533 807 544 Z"/></clipPath><filter id="bsoft" x="-5%" y="-5%" width="110%" height="110%"><feGaussianBlur stdDeviation="1.1"/></filter></defs>
 <ellipse cx="599" cy="56" rx="20" ry="3" fill="url(#sliv)"/>
 <g clip-path="url(#bclip)"><g filter="url(#bsoft)">
 
 <path d="M186 544 C165 528 143 505 148 485 C152 466 162 452 176 436 L200 380 L880 380 L861 495 C840 515 822 533 807 544 Z" fill="url(#bl1)"/>
 <!-- left light petal -->
 <path d="M188 544 C165 528 143 505 148 485 C152 466 162 452 176 436 L172 495 C180 508 188 520 194 528 C199 535 203 540 207 544 Z" fill="url(#blA)"/>
 <path d="M172 495 C180 508 188 520 194 528 C199 535 203 540 207 544 L311 544 C306 525 304 510 306 495 Z" fill="url(#blB)"/>
 <!-- arch -->
 <path d="M300 495 L412 495 C420 510 426 525 432 544 L311 544 C312 520 318 500 330 495 Z" fill="#0448c8"/>
 <path d="M311 544 C312 520 322 497 350 495 C385 494 410 515 424 544 Z" fill="#2472ea"/>
 <path d="M311 544 C312 520 322 497 350 495 C385 494 410 515 424 544" fill="none" stroke="#5cb8f2" stroke-width="1.5"/>
 <path d="M327 544 C329 524 342 508 366 507 C392 506 410 525 420 544 Z" fill="#3088f0"/>
 <path d="M327 544 C329 524 342 508 366 507 C392 506 410 525 420 544" fill="none" stroke="#60b8f4" stroke-width="1"/>
 <path d="M337 544 C339 528 351 516 372 515 C393 515 407 530 414 544 Z" fill="url(#blN)"/>
 <!-- vertical petals -->
 <path d="M412 495 L468 495 C472 515 476 530 480 544 L430 544 C424 530 418 515 412 495 Z" fill="#0540c0"/>
 <path d="M478 495 L510 495 C515 515 520 530 527 544 L492 544 C488 530 483 515 478 495 Z" fill="#0a4ccc"/>
 <path d="M414 495 C420 515 428 530 434 544 M425 495 C430 515 437 530 442 544 M468 495 C472 515 476 530 480 544 M478 495 C483 515 488 530 492 544 M489 495 C493 515 497 530 500 544" fill="none" stroke="#3a8cf0" stroke-width="1.1"/>
 <!-- band 2 light -->
 <path d="M490 497 C495 508 500 515 505 518 C512 528 520 537 527 544 L600 544 C620 540 660 530 700 518 L700 495 L509 495 C520 505 540 520 568 527 C580 530 590 531 600 531 Z" fill="#2a7cec"/>
 <!-- band 1 medium -->
 <path d="M509 495 L522 495 C530 502 545 508 553 508 C565 508 580 500 588 495 L640 495 C630 505 615 520 600 531 C590 531 580 530 568 527 C540 520 520 505 509 495 Z" fill="#0834b0"/>
 <!-- pocket -->
 <path d="M522 495 C528 502 540 507 553 508 C565 508 578 503 588 495 Z" fill="#03081e"/>
 <path d="M540 506 L556 495 M552 508 L569 495 M565 506 L580 496" fill="none" stroke="#0c2070" stroke-width="1.6"/>
 <!-- crease right of band1 -->
 <path d="M563 516 C575 510 585 503 590 495 L600 495 C600 505 598 518 596 530 C585 527 572 522 563 516 Z" fill="url(#blK)"/>
 <!-- petal with light edge, 590-647 -->
 <path d="M590 495 L647 495 C635 505 625 515 614 523 C605 528 596 531 590 531 Z" fill="url(#blC)"/>
 <path d="M647 495 C635 505 625 515 614 523 C605 528 596 531 590 531" fill="none" stroke="#3a84ec" stroke-width="1.2"/>
 <!-- dark navy right of petal -->
 <path d="M647 495 L700 495 L700 513.5 C670 519 630 526 590 531 C600 529 612 524 620 518 C630 510 640 502 647 495 Z" fill="url(#blE)"/>
 <!-- light band B -->
 <path d="M590 531 C620 528 660 520 700 513.5 L700 517.5 C660 526 625 534 600 544 L590 544 Z" fill="#3a8cf0"/>
 <path d="M600 544 C630 534 665 524 700 517.5 L700 544 Z" fill="#021e88"/>
 <!-- 690-800 -->
 <path d="M690 495 L790 495 L790 498 C770 498 730 504 690 517 Z" fill="#2c78e2"/>
 <path d="M690 517 C730 504 770 498 790 498 C800 505 802 515 797 528 C794 535 789 540 784 544 L690 544 Z" fill="url(#blD)"/>
 <path d="M690 517 C730 504 770 498 790 497 C798 503 801 515 797 528 C794 535 789 540 784 544" fill="none" stroke="#3270e0" stroke-width="1.2"/>
 <!-- right bands -->
 <path d="M784 495 L840.5 495 C832 508 825 515 819 523 C810 532 800 540 790 544 L784 544 C792 537 800 525 799.5 513.5 C798 505 792 499 784 495 Z" fill="url(#blG)"/>
 <path d="M840.5 495 L861 495 C852 505 845 512 838.6 518.4 C828 530 818 538 807 544 L790 544 C800 540 810 532 819 523 C825 515 832 508 840.5 495 Z" fill="#0a2070"/>
 <path d="M840.5 495 C832 508 825 515 819 523 C810 532 800 540 790 544" fill="none" stroke="#1a3aa0" stroke-width="1"/>
</g></g>
</svg>

<!-- desktop icons -->
<svg class="a" style="left:24px;top:8px" width="30" height="25" viewBox="0 0 30 25">
 <defs><linearGradient id="mon" x1="0" y1="0" x2="1" y2="1"><stop offset="0" stop-color="#40d4ee"/><stop offset="1" stop-color="#1670c0"/></linearGradient></defs>
 <rect x="0.5" y="0" width="29" height="19.8" rx="1" fill="#2a5e8e"/>
 <rect x="1.2" y="0.7" width="27.6" height="18.2" rx="0.6" fill="url(#mon)"/>
 <rect x="13" y="20" width="4" height="2.4" fill="#8c969f"/>
 <rect x="8.5" y="22.4" width="13" height="1.6" rx="0.5" fill="#c3cad0"/>
</svg>
<div class="t dlabel" style="left:22px;top:39.5px;font-size:7.6px">Dieser PC</div>
<svg class="a" style="left:27px;top:71px" width="24" height="28" viewBox="0 0 24 28">
 <defs><linearGradient id="bin" x1="0" y1="0" x2="1" y2="0"><stop offset="0" stop-color="#dfe6ee"/><stop offset="0.5" stop-color="#eef3f8"/><stop offset="1" stop-color="#d0d9e2"/></linearGradient></defs>
 <path d="M0.3 1 L23.7 1 L21.2 26.2 Q21.1 26.8 20.4 26.8 L3.6 26.8 Q2.9 26.8 2.8 26.2 Z" fill="url(#bin)" fill-opacity="0.92" stroke="#c4ccd4" stroke-width="0.5"/>
 <path d="M0.6 1.6 L23.4 1.6" stroke="#f6f8fa" stroke-width="1.2"/>
 <g transform="translate(12 14) scale(1.45) translate(-12 -13)" fill="#1a80dc">
  <path d="M9.2 9.5 L12 8 L14.8 9.5 L13.6 11.6 L12 10.6 L10.6 13 L8.6 11.8 Z"/>
  <path d="M15.6 11.2 L17.8 15.2 L16.6 17.8 L13.6 17.8 L13.6 15.6 L15.6 15.6 L14.2 13 Z"/>
  <path d="M11.6 17.8 L8 17.8 L6.4 15.2 L7.6 12.6 L9.6 13.8 L8.8 15.6 L11.6 15.6 Z"/>
 </g>
</svg>
<div class="t dlabel" style="left:20px;top:104.5px;font-size:7.6px">Papierkorb</div>

<!-- window -->
<div class="win">
 <div class="tabs"></div>
 <div class="tab"></div>
 <div class="toolbar"></div>
</div>


<!-- ===== tabs ===== -->
<svg class="a" style="left:177px;top:61.5px" width="167" height="22" viewBox="0 0 167 22">
 <path d="M-6 21 Q0 21 0 15 L0 6 Q0 0.5 6 0.5 L154 0.5 Q160 0.5 160 6 L160 15 Q160 21 166 21 L166 22 L-6 22 Z" fill="#eff4f9"/>
</svg>
<svg class="a" style="left:182px;top:66px" width="13" height="12" viewBox="0 0 13 12">
 <defs><linearGradient id="hb" x1="0" y1="0" x2="0" y2="1"><stop offset="0" stop-color="#e2e2e2"/><stop offset="1" stop-color="#b7b7b7"/></linearGradient></defs>
 <path d="M2 5.6 L6.4 2 L10.8 5.6 L10.8 11 L7.6 11 L7.6 7.6 L5.2 7.6 L5.2 11 L2 11 Z" fill="url(#hb)"/>
 <path d="M1.3 5.9 L6.4 1.4 L11.5 5.9" fill="none" stroke="#f07818" stroke-width="1.4" stroke-linejoin="round" stroke-linecap="round"/>
</svg>
<div class="t" style="left:200.8px;top:68.3px;color:#1a1a1a;font-size:8.6px;-webkit-text-stroke:0.35px #1a1a1a">Start</div>
<svg class="a" style="left:319px;top:68.5px" width="8" height="8" viewBox="0 0 8 8"><path d="M0.8 0.8 L7.2 7.2 M7.2 0.8 L0.8 7.2" stroke="#3a3a3a" stroke-width="0.9"/></svg>

<svg class="a" style="left:343.5px;top:67px" width="10" height="10" viewBox="0 0 10 10">
 <defs><linearGradient id="pic" x1="0" y1="0" x2="1" y2="1"><stop offset="0" stop-color="#2a9af0"/><stop offset="1" stop-color="#0d6ed0"/></linearGradient></defs>
 <rect x="0" y="0" width="9.6" height="10" rx="1" fill="url(#pic)"/>
 <path d="M1.2 9 L4.8 5.3 L8.4 9 Z" fill="#fff"/><circle cx="7.2" cy="2.6" r="0.9" fill="#fff"/>
</svg>
<div class="t" style="left:360.5px;top:68.3px;color:#3e4650;font-size:8.6px">Bilder</div>
<svg class="a" style="left:479px;top:68.5px" width="8" height="8" viewBox="0 0 8 8"><path d="M0.8 0.8 L7.2 7.2 M7.2 0.8 L0.8 7.2" stroke="#4a4f55" stroke-width="0.9"/></svg>
<div class="a" style="left:496px;top:66px;width:1px;height:12px;background:#b9c9d8"></div>

<svg class="a" style="left:503px;top:66px" width="11" height="12" viewBox="0 0 11 12">
 <path d="M5.5 0.5 L5.5 8 M2 4.8 L5.5 8.2 L9 4.8" fill="none" stroke="#1aa37a" stroke-width="1.3"/>
 <rect x="1.3" y="10.2" width="8.4" height="1.3" fill="#1aa37a"/>
</svg>
<div class="t" style="left:520.5px;top:68.3px;color:#3e4650;font-size:8.6px">Downloads</div>
<svg class="a" style="left:639px;top:68.5px" width="8" height="8" viewBox="0 0 8 8"><path d="M0.8 0.8 L7.2 7.2 M7.2 0.8 L0.8 7.2" stroke="#4a4f55" stroke-width="0.9"/></svg>
<div class="a" style="left:656px;top:66px;width:1px;height:12px;background:#b9c9d8"></div>
<svg class="a" style="left:669px;top:68px" width="8" height="8" viewBox="0 0 8 8"><path d="M4 0.3 L4 7.7 M0.3 4 L7.7 4" stroke="#3a3f45" stroke-width="0.9"/></svg>

<!-- window controls -->
<div class="a" style="left:838px;top:65px;width:9px;height:1px;background:#2b2b2b"></div>
<div class="a" style="left:869.5px;top:61.5px;width:8px;height:8px;border:1px solid #2b2b2b;border-radius:1.5px"></div>
<svg class="a" style="left:900px;top:60.5px" width="10" height="10" viewBox="0 0 10 10"><path d="M1 1 L9 9 M9 1 L1 9" stroke="#2b2b2b" stroke-width="1"/></svg>


<!-- ===== toolbar ===== -->
<svg class="a" style="left:185px;top:95px" width="11" height="11" viewBox="0 0 11 11">
 <circle cx="5.5" cy="5.5" r="4.8" fill="none" stroke="#a8acb0" stroke-width="0.9"/>
 <path d="M5.5 3 L5.5 8 M3 5.5 L8 5.5" stroke="#5aa6e6" stroke-width="0.9"/>
</svg>
<div class="t" style="left:201.8px;top:97px;color:#9a9a9a">Neu</div>
<svg class="a" style="left:220.5px;top:99.5px" width="5" height="3" viewBox="0 0 5 3"><path d="M0.5 0.5 L2.5 2.5 L4.5 0.5" fill="none" stroke="#a0a0a0" stroke-width="0.8"/></svg>
<div class="sep" style="left:236px;top:91px;height:20px"></div>

<svg class="a" style="left:248px;top:95px" width="12" height="12" viewBox="0 0 12 12">
 <path d="M2.5 1 L6 6.5 M9.5 1 L6 6.5" stroke="#b9bcc0" stroke-width="0.9"/>
 <circle cx="3" cy="9" r="1.9" fill="none" stroke="#8ec0ec" stroke-width="1"/>
 <circle cx="9" cy="9" r="1.9" fill="none" stroke="#8ec0ec" stroke-width="1"/>
</svg>
<svg class="a" style="left:280.5px;top:95.5px" width="11" height="11" viewBox="0 0 11 11">
 <rect x="0.8" y="2.8" width="5.5" height="7.5" rx="1.2" fill="none" stroke="#b9bcc0" stroke-width="0.9"/>
 <rect x="3.8" y="0.6" width="5.8" height="7.6" rx="1.3" fill="#eff4f9" stroke="#8ec0ec" stroke-width="1"/>
</svg>
<svg class="a" style="left:312.5px;top:94.5px" width="11" height="12" viewBox="0 0 11 12">
 <path d="M3 1.8 L1.2 1.8 Q0.6 1.8 0.6 2.4 L0.6 10.6 Q0.6 11.2 1.2 11.2 L4 11.2" fill="none" stroke="#b9bcc0" stroke-width="0.9"/>
 <path d="M3 2.2 L3 1 L7 1 L7 2.2 M7 1.8 L9 1.8" fill="none" stroke="#b9bcc0" stroke-width="0.9"/>
 <rect x="4.5" y="4.6" width="5.8" height="6.8" rx="0.6" fill="none" stroke="#8ec0ec" stroke-width="1"/>
</svg>
<svg class="a" style="left:344px;top:94.5px" width="12" height="12" viewBox="0 0 12 12">
 <path d="M5.5 2.2 L2 2.2 Q0.8 2.2 0.8 3.4 L0.8 8.6 Q0.8 9.8 2 9.8 L5.5 9.8 M7.5 2.2 L9.8 2.2 Q11 2.2 11 3.4 L11 8.6 Q11 9.8 9.8 9.8 L7.5 9.8" fill="none" stroke="#b9bcc0" stroke-width="0.9"/>
 <path d="M6.5 0.5 L6.5 11.5" stroke="#8ec0ec" stroke-width="1"/>
 <path d="M2.5 8 L3.9 4 L5.3 8 M3 6.8 L4.8 6.8" fill="none" stroke="#8ec0ec" stroke-width="0.8"/>
</svg>
<svg class="a" style="left:376.5px;top:95.5px" width="12" height="11" viewBox="0 0 12 11">
 <path d="M4 2.5 L2 2.5 Q0.8 2.5 0.8 3.7 L0.8 8.6 Q0.8 9.8 2 9.8 L8 9.8 Q9.2 9.8 9.2 8.6 L9.2 7.5" fill="none" stroke="#b9bcc0" stroke-width="0.9"/>
 <path d="M3.5 7.5 Q4 4.2 8 4.2 L8 6.2 L11 3.2 L8 0.5 L8 2.4 Q3.5 2.8 3.5 7.5 Z" fill="none" stroke="#8ec0ec" stroke-width="0.9" stroke-linejoin="round"/>
</svg>
<svg class="a" style="left:408.5px;top:95px" width="11" height="11" viewBox="0 0 11 11">
 <path d="M0.8 2 L10.2 2 M4 2 L4 0.8 L7 0.8 L7 2 M1.8 2 L2.5 9.6 Q2.6 10.3 3.3 10.3 L7.7 10.3 Q8.4 10.3 8.5 9.6 L9.2 2 M4.4 4.2 L4.4 8.2 M6.6 4.2 L6.6 8.2" fill="none" stroke="#b9bcc0" stroke-width="0.9"/>
</svg>
<div class="sep" style="left:431px;top:91px;height:20px"></div>

<svg class="a" style="left:442.5px;top:96px" width="12" height="10" viewBox="0 0 12 10">
 <path d="M3 9.5 L3 0.8 M0.5 3.2 L3 0.6 L5.5 3.2" fill="none" stroke="#b8bcc0" stroke-width="0.9"/>
 <path d="M8.5 0.5 L8.5 9.2 M6 6.8 L8.5 9.4 L11 6.8" fill="none" stroke="#8ec0ec" stroke-width="0.9"/>
</svg>
<div class="t" style="left:458.7px;top:97px;color:#9a9a9a">Sortieren</div>
<svg class="a" style="left:495px;top:99.5px" width="5" height="3" viewBox="0 0 5 3"><path d="M0.5 0.5 L2.5 2.5 L4.5 0.5" fill="none" stroke="#a0a0a0" stroke-width="0.8"/></svg>

<svg class="a" style="left:518.5px;top:96.5px" width="12" height="9" viewBox="0 0 12 9">
 <rect x="0.6" y="0.6" width="2.6" height="2.6" rx="0.6" fill="none" stroke="#3a3a3a" stroke-width="0.9"/>
 <rect x="0.6" y="5.6" width="2.6" height="2.6" rx="0.6" fill="none" stroke="#3a3a3a" stroke-width="0.9"/>
 <path d="M5.5 1.2 L11.2 1.2 M5.5 6.4 L11.2 6.4" stroke="#3a3a3a" stroke-width="0.9"/>
</svg>
<div class="t" style="left:535px;top:97px;color:#1f1f1f">Anzeigen</div>
<svg class="a" style="left:572.5px;top:99.5px" width="5" height="3" viewBox="0 0 5 3"><path d="M0.5 0.5 L2.5 2.5 L4.5 0.5" fill="none" stroke="#7a7a7a" stroke-width="0.8"/></svg>

<svg class="a" style="left:596px;top:95.5px" width="11" height="11" viewBox="0 0 11 11">
 <path d="M0.6 0.8 L10.4 0.8 L6.6 5.6 L6.6 10.2 L4.4 8.8 L4.4 5.6 Z" fill="none" stroke="#3a3a3a" stroke-width="0.9" stroke-linejoin="round"/>
</svg>
<div class="t" style="left:612.8px;top:97px;color:#1f1f1f">Filter</div>
<svg class="a" style="left:633.5px;top:99.5px" width="5" height="3" viewBox="0 0 5 3"><path d="M0.5 0.5 L2.5 2.5 L4.5 0.5" fill="none" stroke="#7a7a7a" stroke-width="0.8"/></svg>
<div class="sep" style="left:649px;top:91px;height:20px"></div>
<svg class="a" style="left:660px;top:99px" width="13" height="4" viewBox="0 0 13 4">
 <circle cx="2" cy="2" r="1.3" fill="#2a2a2a"/><circle cx="6.5" cy="2" r="1.3" fill="#2a2a2a"/><circle cx="11" cy="2" r="1.3" fill="#2a2a2a"/>
</svg>


<!-- ===== address row ===== -->
<svg class="a" style="left:181px;top:132px" width="10" height="9" viewBox="0 0 10 9"><path d="M9.5 4.5 L1 4.5 M4.6 0.9 L1 4.5 L4.6 8.1" fill="none" stroke="#a3a3a3" stroke-width="0.9"/></svg>
<svg class="a" style="left:204px;top:132px" width="10" height="9" viewBox="0 0 10 9"><path d="M0.5 4.5 L9 4.5 M5.4 0.9 L9 4.5 L5.4 8.1" fill="none" stroke="#a3a3a3" stroke-width="0.9"/></svg>
<svg class="a" style="left:226.5px;top:133.5px" width="6" height="4" viewBox="0 0 6 4"><path d="M0.5 0.8 L3 3.2 L5.5 0.8" fill="none" stroke="#a3a3a3" stroke-width="0.8"/></svg>
<svg class="a" style="left:244.5px;top:131.5px" width="9" height="9" viewBox="0 0 9 9"><path d="M4.5 8.5 L4.5 0.8 M0.9 4.4 L4.5 0.8 L8.1 4.4" fill="none" stroke="#585858" stroke-width="0.9"/></svg>
<div class="box" style="left:263px;top:124.5px;width:417px;height:23px"></div>
<svg class="a" style="left:268px;top:129px" width="13" height="12" viewBox="0 0 13 12">
 <path d="M2 5.6 L6.4 2 L10.8 5.6 L10.8 11 L7.6 11 L7.6 7.6 L5.2 7.6 L5.2 11 L2 11 Z" fill="url(#hb)"/>
 <path d="M1.3 5.9 L6.4 1.4 L11.5 5.9" fill="none" stroke="#f07818" stroke-width="1.4" stroke-linejoin="round" stroke-linecap="round"/>
</svg>
<svg class="a" style="left:284px;top:133px" width="4" height="6" viewBox="0 0 4 6"><path d="M0.8 0.6 L3 3 L0.8 5.4" fill="none" stroke="#555" stroke-width="0.8"/></svg>
<div class="t" style="left:292.5px;top:132px;color:#1f1f1f">Start</div>
<svg class="a" style="left:641px;top:133px" width="8" height="5" viewBox="0 0 8 5"><path d="M0.6 0.8 L4 4.2 L7.4 0.8" fill="none" stroke="#555" stroke-width="0.9"/></svg>
<svg class="a" style="left:662.5px;top:130.5px" width="10" height="10" viewBox="0 0 10 10"><path d="M8.6 5 A3.6 3.6 0 1 1 7.4 2.3 M7.8 0.6 L7.8 2.8 L5.6 2.8" fill="none" stroke="#555" stroke-width="0.9"/></svg>
<div class="box" style="left:686.5px;top:124.5px;width:228.5px;height:23px"></div>
<svg class="a" style="left:695px;top:131px" width="10" height="9" viewBox="0 0 10 9"><circle cx="4.2" cy="3.8" r="2.9" fill="none" stroke="#707070" stroke-width="0.9"/><path d="M6.3 5.9 L8.4 8" stroke="#707070" stroke-width="1"/></svg>
<div class="t" style="left:713.5px;top:132px;color:#6a6a6a">Start durchsuchen</div>


<!-- ===== nav pane ===== -->
<div class="a" style="left:173px;top:153.5px;width:102px;height:21px;background:#dadada;border-radius:2px"></div>
<svg class="a" style="left:193px;top:158px" width="13" height="12" viewBox="0 0 13 12">
 <path d="M2 5.6 L6.4 2 L10.8 5.6 L10.8 11 L7.6 11 L7.6 7.6 L5.2 7.6 L5.2 11 L2 11 Z" fill="url(#hb)"/>
 <path d="M1.3 5.9 L6.4 1.4 L11.5 5.9" fill="none" stroke="#f07818" stroke-width="1.4" stroke-linejoin="round" stroke-linecap="round"/>
</svg>
<div class="t" style="left:207.5px;top:160.8px;color:#1b1b1b;">Start</div>
<svg class="a" style="left:181.5px;top:183px" width="4" height="6" viewBox="0 0 4 6"><path d="M0.7 0.6 L3.1 3 L0.7 5.4" fill="none" stroke="#8c8c8c" stroke-width="0.8"/></svg>
<svg class="a" style="left:193.5px;top:181.5px" width="12" height="8" viewBox="0 0 12 8">
 <defs><linearGradient id="od" x1="0" y1="0" x2="1" y2="1"><stop offset="0" stop-color="#0a64c8"/><stop offset="1" stop-color="#2ea0f0"/></linearGradient></defs>
 <path d="M2.2 7.4 Q0.3 7.4 0.3 5.6 Q0.3 3.9 2.1 3.8 Q3 0.6 6 0.6 Q8.5 0.6 9.3 3.2 Q11.7 3.4 11.7 5.4 Q11.7 7.4 9.6 7.4 Z" fill="url(#od)"/>
</svg>
<div class="t" style="left:207.6px;top:182.0px;color:#1b1b1b;transform:scaleX(0.895)">André – Persönlich</div>
<div class="a" style="left:178px;top:207px;width:92px;height:1px;background:#e3e3e3"></div>
<svg class="a" style="left:193.5px;top:224px" width="12" height="9" viewBox="0 0 12 9">
 <defs><linearGradient id="dk" x1="0" y1="0" x2="1" y2="1"><stop offset="0" stop-color="#36c2ea"/><stop offset="1" stop-color="#1a6fc4"/></linearGradient></defs>
 <rect x="0.3" y="0.1" width="11.4" height="8.3" rx="0.7" fill="url(#dk)"/><rect x="0.3" y="7.7" width="11.4" height="0.8" fill="#1b4f8a"/>
 <rect x="1.2" y="1.3" width="0.9" height="0.9" fill="#cdeffb"/><rect x="1.2" y="3" width="0.9" height="0.9" fill="#cdeffb"/>
</svg>
<div class="t" style="left:207.6px;top:224.7px;color:#1b1b1b;">Desktop</div>
<svg class="a" style="left:266px;top:224.5px" width="8" height="8" viewBox="0 0 8 8"><path d="M4.6 0.4 L7.6 3.4 L6.8 4.0 L5.9 3.7 L4.4 5.2 L4.5 6.6 L3.9 7.1 L0.9 4.1 L1.4 3.5 L2.8 3.6 L4.3 2.1 L4.0 1.2 Z" fill="#8c949b"/><path d="M2.4 5.6 L0.3 7.7" stroke="#8c949b" stroke-width="0.8"/></svg>
<svg class="a" style="left:195px;top:243.5px" width="9" height="12" viewBox="0 0 9 12">
 <path d="M4.5 0.3 L4.5 8.2 M1 4.9 L4.5 8.3 L8 4.9" fill="none" stroke="#1aa37a" stroke-width="1.1"/>
 <rect x="0.6" y="10.3" width="7.8" height="1.1" fill="#1aa37a"/>
</svg>
<div class="t" style="left:207.6px;top:246.0px;color:#1b1b1b;">Downloads</div>
<svg class="a" style="left:266px;top:245.8px" width="8" height="8" viewBox="0 0 8 8"><path d="M4.6 0.4 L7.6 3.4 L6.8 4.0 L5.9 3.7 L4.4 5.2 L4.5 6.6 L3.9 7.1 L0.9 4.1 L1.4 3.5 L2.8 3.6 L4.3 2.1 L4.0 1.2 Z" fill="#8c949b"/><path d="M2.4 5.6 L0.3 7.7" stroke="#8c949b" stroke-width="0.8"/></svg>
<svg class="a" style="left:195.5px;top:265.5px" width="8" height="11" viewBox="0 0 8 11">
 <defs><linearGradient id="dc" x1="0" y1="0" x2="0" y2="1"><stop offset="0" stop-color="#b7c9dc"/><stop offset="1" stop-color="#7f98b6"/></linearGradient></defs>
 <rect x="0.2" y="0.2" width="7.6" height="10.4" rx="0.7" fill="url(#dc)"/><rect x="4.6" y="2.2" width="1.8" height="1.8" fill="#eef3f8"/>
</svg>
<div class="t" style="left:207.6px;top:267.4px;color:#1b1b1b;">Dokumente</div>
<svg class="a" style="left:266px;top:267.2px" width="8" height="8" viewBox="0 0 8 8"><path d="M4.6 0.4 L7.6 3.4 L6.8 4.0 L5.9 3.7 L4.4 5.2 L4.5 6.6 L3.9 7.1 L0.9 4.1 L1.4 3.5 L2.8 3.6 L4.3 2.1 L4.0 1.2 Z" fill="#8c949b"/><path d="M2.4 5.6 L0.3 7.7" stroke="#8c949b" stroke-width="0.8"/></svg>
<svg class="a" style="left:194.5px;top:287.5px" width="10" height="10" viewBox="0 0 10 10">
 <rect x="0" y="0" width="9.6" height="9.6" rx="0.8" fill="url(#pic)"/>
 <path d="M1.1 8.6 L4.8 5 L8.5 8.6 Z" fill="#fff"/><circle cx="7.3" cy="2.4" r="0.9" fill="#fff"/>
</svg>
<div class="t" style="left:207.6px;top:288.7px;color:#1b1b1b;">Bilder</div>
<svg class="a" style="left:266px;top:288.5px" width="8" height="8" viewBox="0 0 8 8"><path d="M4.6 0.4 L7.6 3.4 L6.8 4.0 L5.9 3.7 L4.4 5.2 L4.5 6.6 L3.9 7.1 L0.9 4.1 L1.4 3.5 L2.8 3.6 L4.3 2.1 L4.0 1.2 Z" fill="#8c949b"/><path d="M2.4 5.6 L0.3 7.7" stroke="#8c949b" stroke-width="0.8"/></svg>
<svg class="a" style="left:194px;top:308px" width="11" height="11" viewBox="0 0 11 11">
 <defs><linearGradient id="mu" x1="0" y1="0" x2="1" y2="1"><stop offset="0" stop-color="#f08a4a"/><stop offset="0.6" stop-color="#e0686a"/><stop offset="1" stop-color="#b060c0"/></linearGradient></defs>
 <circle cx="5.5" cy="5.5" r="5.3" fill="url(#mu)"/>
 <path d="M5.6 2.6 L5.6 7 M5.6 2.6 Q7 2.8 7.4 4" fill="none" stroke="#fff" stroke-width="0.9"/><circle cx="4.7" cy="7.3" r="1.2" fill="#fff"/>
</svg>
<div class="t" style="left:207.6px;top:310.0px;color:#1b1b1b;">Musik</div>
<svg class="a" style="left:266px;top:309.8px" width="8" height="8" viewBox="0 0 8 8"><path d="M4.6 0.4 L7.6 3.4 L6.8 4.0 L5.9 3.7 L4.4 5.2 L4.5 6.6 L3.9 7.1 L0.9 4.1 L1.4 3.5 L2.8 3.6 L4.3 2.1 L4.0 1.2 Z" fill="#8c949b"/><path d="M2.4 5.6 L0.3 7.7" stroke="#8c949b" stroke-width="0.8"/></svg>
<svg class="a" style="left:195px;top:329.5px" width="9" height="11" viewBox="0 0 9 11">
 <defs><linearGradient id="vi" x1="0" y1="0" x2="1" y2="1"><stop offset="0" stop-color="#a05af0"/><stop offset="1" stop-color="#7a36d0"/></linearGradient></defs>
 <rect x="0.1" y="0.2" width="8.8" height="10.4" rx="0.8" fill="url(#vi)"/>
 <path d="M3.2 3 L6.4 5.4 L3.2 7.8 Z" fill="#fff"/>
 <rect x="0.6" y="1" width="1" height="1" fill="#5a20a0"/><rect x="0.6" y="4.8" width="1" height="1" fill="#5a20a0"/><rect x="0.6" y="8.6" width="1" height="1" fill="#5a20a0"/>
 <rect x="7.4" y="1" width="1" height="1" fill="#5a20a0"/><rect x="7.4" y="4.8" width="1" height="1" fill="#5a20a0"/><rect x="7.4" y="8.6" width="1" height="1" fill="#5a20a0"/>
</svg>
<div class="t" style="left:207.6px;top:331.4px;color:#1b1b1b;">Videos</div>
<svg class="a" style="left:266px;top:331.2px" width="8" height="8" viewBox="0 0 8 8"><path d="M4.6 0.4 L7.6 3.4 L6.8 4.0 L5.9 3.7 L4.4 5.2 L4.5 6.6 L3.9 7.1 L0.9 4.1 L1.4 3.5 L2.8 3.6 L4.3 2.1 L4.0 1.2 Z" fill="#8c949b"/><path d="M2.4 5.6 L0.3 7.7" stroke="#8c949b" stroke-width="0.8"/></svg>
<div class="a" style="left:178px;top:356.5px;width:92px;height:1px;background:#e3e3e3"></div>
<svg class="a" style="left:180px;top:376px" width="6" height="4" viewBox="0 0 6 4"><path d="M0.5 0.6 L3 3.2 L5.5 0.6" fill="none" stroke="#6a6a6a" stroke-width="0.8"/></svg>
<svg class="a" style="left:194px;top:373px" width="10" height="9" viewBox="0 0 10 9">
 <rect x="0" y="0" width="10" height="6.6" rx="0.5" fill="url(#dk)"/>
 <rect x="4.3" y="6.6" width="1.4" height="1.4" fill="#8a98a6"/><rect x="2.6" y="7.8" width="4.8" height="0.8" fill="#9aa6b2"/>
</svg>
<div class="t" style="left:207.6px;top:374.0px;color:#1b1b1b;">Dieser PC</div>
<svg class="a" style="left:187.2px;top:396.5px" width="4" height="6" viewBox="0 0 4 6"><path d="M0.7 0.6 L3.1 3 L0.7 5.4" fill="none" stroke="#8c8c8c" stroke-width="0.8"/></svg>
<svg class="a" style="left:199px;top:393px" width="11" height="8" viewBox="0 0 11 8">
 <rect x="0.3" y="0.2" width="1.2" height="1.2" fill="#1a8ae8"/><rect x="1.9" y="0.2" width="1.2" height="1.2" fill="#1a8ae8"/>
 <rect x="0.3" y="1.8" width="1.2" height="1.2" fill="#1a8ae8"/><rect x="1.9" y="1.8" width="1.2" height="1.2" fill="#1a8ae8"/>
 <rect x="0.5" y="4.6" width="10.2" height="3.2" rx="0.6" fill="#3c3c3c"/><rect x="0.5" y="4.6" width="10.2" height="1" rx="0.4" fill="#9a9a9a"/>
</svg>
<div class="t" style="left:212.8px;top:395.3px;color:#1b1b1b;">Windows (C:)</div>
<svg class="a" style="left:187.2px;top:417.8px" width="4" height="6" viewBox="0 0 4 6"><path d="M0.7 0.6 L3.1 3 L0.7 5.4" fill="none" stroke="#8c8c8c" stroke-width="0.8"/></svg>
<svg class="a" style="left:199.5px;top:418.5px" width="11" height="4" viewBox="0 0 11 4">
 <rect x="0.2" y="0.2" width="10.2" height="3.4" rx="0.6" fill="#3c3c3c"/><rect x="0.2" y="0.2" width="10.2" height="1" rx="0.4" fill="#9a9a9a"/>
</svg>
<div class="t" style="left:212.8px;top:416.7px;color:#1b1b1b;">Daten (D:)</div>
<svg class="a" style="left:181.5px;top:439.5px" width="4" height="6" viewBox="0 0 4 6"><path d="M0.7 0.6 L3.1 3 L0.7 5.4" fill="none" stroke="#8c8c8c" stroke-width="0.8"/></svg>
<svg class="a" style="left:193.5px;top:436px" width="12" height="11" viewBox="0 0 12 11">
 <rect x="2" y="2.6" width="9.8" height="6.2" rx="0.5" fill="url(#dk)"/>
 <rect x="6" y="8.8" width="1.4" height="1.2" fill="#8a98a6"/><rect x="4.5" y="9.8" width="4.4" height="0.8" fill="#9aa6b2"/>
 <circle cx="3.2" cy="3.2" r="2.9" fill="#2aa8d8" stroke="#fff" stroke-width="0.5"/>
 <path d="M1.2 3.2 L5.2 3.2 M3.2 1.2 Q1.8 3.2 3.2 5.2 M3.2 1.2 Q4.6 3.2 3.2 5.2" fill="none" stroke="#d8f2fb" stroke-width="0.5"/>
</svg>
<div class="t" style="left:207.6px;top:438.0px;color:#1b1b1b;">Netzwerk</div>
<div class="a" style="left:276px;top:152px;width:1px;height:328px;background:#f3f3f3"></div>
<div class="a" style="left:737px;top:152px;width:1px;height:328px;background:#f3f3f3"></div>
<div class="t" style="left:180.8px;top:483.0px;color:#3a3a3a;">30 Elemente</div>


<!-- ===== content ===== -->
<svg class="a" style="left:282.5px;top:163px" width="6" height="4" viewBox="0 0 6 4"><path d="M0.5 0.6 L3 3.2 L5.5 0.6" fill="none" stroke="#777" stroke-width="0.8"/></svg>
<div class="t" style="left:291.9px;top:161.1px;color:#4141a6;">Schnellzugriff</div>
<div class="a" style="left:287px;top:178px;width:150px;height:37px;border:1px solid #c8e2f8;background:#fff;border-radius:2px"></div>
<svg class="a" style="left:302.8px;top:184.4px" width="28" height="22" viewBox="0 0 28 22">
 <defs><linearGradient id="fDesktop" x1="0" y1="0" x2="1" y2="1">
  <stop offset="0" stop-color="#2cc6ec"/><stop offset="1" stop-color="#1480d4"/></linearGradient></defs>
 <path d="M0 1.2 Q0 0 1.2 0 L10.6 0 Q11.4 0 11.9 0.6 L13.6 2.9 L26.8 2.9 Q28 2.9 28 4.1 L28 8 L0 8 Z" fill="#0b6fd6"/>
 <path d="M0 5.2 L28 5.2 L28 20.8 Q28 22 26.8 22 L1.2 22 Q0 22 0 20.8 Z" fill="url(#fDesktop)"/>
 <rect x="0" y="20.6" width="28" height="1.4" fill="#0b4f9c"/><rect x="1.6" y="7.6" width="1.4" height="1.2" fill="#d8f4fc"/><rect x="1.6" y="10.4" width="1.4" height="1.2" fill="#d8f4fc"/>
</svg>
<div class="t" style="left:336.2px;top:182.1px;color:#1b1b1b;">Desktop</div>
<div class="t" style="left:336.2px;top:192.9px;color:#6b6b6b;">Lokal gespeichert</div>
<svg class="a" style="left:336.2px;top:204.20000000000002px" width="8" height="8" viewBox="0 0 8 8"><path d="M4.6 0.4 L7.6 3.4 L6.8 4.0 L5.9 3.7 L4.4 5.2 L4.5 6.6 L3.9 7.1 L0.9 4.1 L1.4 3.5 L2.8 3.6 L4.3 2.1 L4.0 1.2 Z" fill="#8c949b"/><path d="M2.4 5.6 L0.3 7.7" stroke="#8c949b" stroke-width="0.8"/></svg>
<svg class="a" style="left:454.8px;top:184.4px" width="28" height="22" viewBox="0 0 28 22">
 <defs><linearGradient id="fDownloads" x1="0" y1="0" x2="1" y2="1">
  <stop offset="0" stop-color="#2cc88c"/><stop offset="1" stop-color="#0e9aa4"/></linearGradient></defs>
 <path d="M0 1.2 Q0 0 1.2 0 L10.6 0 Q11.4 0 11.9 0.6 L13.6 2.9 L26.8 2.9 Q28 2.9 28 4.1 L28 8 L0 8 Z" fill="#0a7a55"/>
 <path d="M0 5.2 L28 5.2 L28 20.8 Q28 22 26.8 22 L1.2 22 Q0 22 0 20.8 Z" fill="url(#fDownloads)"/>
 <path d="M13.9 6.8 L13.9 16.2 M9.8 12.6 L13.9 16.6 L18 12.6" fill="none" stroke="#fff" stroke-width="1.3"/><rect x="9.3" y="18.4" width="9.1" height="1.2" fill="#fff"/>
</svg>
<div class="t" style="left:488.4px;top:182.1px;color:#1b1b1b;">Downloads</div>
<div class="t" style="left:488.4px;top:192.9px;color:#6b6b6b;">Lokal gespeichert</div>
<svg class="a" style="left:488.4px;top:204.20000000000002px" width="8" height="8" viewBox="0 0 8 8"><path d="M4.6 0.4 L7.6 3.4 L6.8 4.0 L5.9 3.7 L4.4 5.2 L4.5 6.6 L3.9 7.1 L0.9 4.1 L1.4 3.5 L2.8 3.6 L4.3 2.1 L4.0 1.2 Z" fill="#8c949b"/><path d="M2.4 5.6 L0.3 7.7" stroke="#8c949b" stroke-width="0.8"/></svg>
<svg class="a" style="left:302.8px;top:228.2px" width="28" height="22" viewBox="0 0 28 22">
 <defs><linearGradient id="fDokumente" x1="0" y1="0" x2="1" y2="1">
  <stop offset="0" stop-color="#a4bcd6"/><stop offset="1" stop-color="#7c96b4"/></linearGradient></defs>
 <path d="M0 1.2 Q0 0 1.2 0 L10.6 0 Q11.4 0 11.9 0.6 L13.6 2.9 L26.8 2.9 Q28 2.9 28 4.1 L28 8 L0 8 Z" fill="#5d7587"/>
 <path d="M0 5.2 L28 5.2 L28 20.8 Q28 22 26.8 22 L1.2 22 Q0 22 0 20.8 Z" fill="url(#fDokumente)"/>
 <g fill="#f4f7fa"><rect x="7.2" y="7.7" width="7" height="1.2"/><rect x="7.2" y="10.7" width="7" height="1.2"/><rect x="7.2" y="13.9" width="13.5" height="1.2"/><rect x="7.2" y="17.2" width="13.5" height="1.2"/><rect x="16.3" y="7.8" width="4.4" height="3.9"/></g>
</svg>
<div class="t" style="left:336.2px;top:225.9px;color:#1b1b1b;">Dokumente</div>
<div class="t" style="left:336.2px;top:236.7px;color:#6b6b6b;">Lokal gespeichert</div>
<svg class="a" style="left:336.2px;top:248.0px" width="8" height="8" viewBox="0 0 8 8"><path d="M4.6 0.4 L7.6 3.4 L6.8 4.0 L5.9 3.7 L4.4 5.2 L4.5 6.6 L3.9 7.1 L0.9 4.1 L1.4 3.5 L2.8 3.6 L4.3 2.1 L4.0 1.2 Z" fill="#8c949b"/><path d="M2.4 5.6 L0.3 7.7" stroke="#8c949b" stroke-width="0.8"/></svg>
<svg class="a" style="left:454.8px;top:228.2px" width="28" height="22" viewBox="0 0 28 22">
 <defs><linearGradient id="fBilder" x1="0" y1="0" x2="1" y2="1">
  <stop offset="0" stop-color="#2aa8ee"/><stop offset="1" stop-color="#0d66cc"/></linearGradient></defs>
 <path d="M0 1.2 Q0 0 1.2 0 L10.6 0 Q11.4 0 11.9 0.6 L13.6 2.9 L26.8 2.9 Q28 2.9 28 4.1 L28 8 L0 8 Z" fill="#0a62c8"/>
 <path d="M0 5.2 L28 5.2 L28 20.8 Q28 22 26.8 22 L1.2 22 Q0 22 0 20.8 Z" fill="url(#fBilder)"/>
 <path d="M4.8 21.4 L13.9 11.2 L22.8 21.4 Z" fill="#e8eef9"/><circle cx="17.7" cy="7.8" r="1.5" fill="#e8eef9"/>
</svg>
<div class="t" style="left:488.4px;top:225.9px;color:#1b1b1b;">Bilder</div>
<div class="t" style="left:488.4px;top:236.7px;color:#6b6b6b;">Lokal gespeichert</div>
<svg class="a" style="left:488.4px;top:248.0px" width="8" height="8" viewBox="0 0 8 8"><path d="M4.6 0.4 L7.6 3.4 L6.8 4.0 L5.9 3.7 L4.4 5.2 L4.5 6.6 L3.9 7.1 L0.9 4.1 L1.4 3.5 L2.8 3.6 L4.3 2.1 L4.0 1.2 Z" fill="#8c949b"/><path d="M2.4 5.6 L0.3 7.7" stroke="#8c949b" stroke-width="0.8"/></svg>
<svg class="a" style="left:302.8px;top:271.9px" width="28" height="22" viewBox="0 0 28 22">
 <defs><linearGradient id="fMusik" x1="0" y1="0" x2="1" y2="1">
  <stop offset="0" stop-color="#f48c48"/><stop offset="0.55" stop-color="#e06a72"/><stop offset="1" stop-color="#a85ec4"/></linearGradient></defs>
 <path d="M0 1.2 Q0 0 1.2 0 L10.6 0 Q11.4 0 11.9 0.6 L13.6 2.9 L26.8 2.9 Q28 2.9 28 4.1 L28 8 L0 8 Z" fill="#c8641c"/>
 <path d="M0 5.2 L28 5.2 L28 20.8 Q28 22 26.8 22 L1.2 22 Q0 22 0 20.8 Z" fill="url(#fMusik)"/>
 <path d="M14.5 6 L14.5 17 M14.5 6.2 Q18.8 6.6 19.2 10.6 L14.5 9.4" fill="#fff" stroke="#fff" stroke-width="1.2" stroke-linejoin="round"/><circle cx="12.2" cy="17.1" r="2.5" fill="#fff"/>
</svg>
<div class="t" style="left:336.2px;top:269.6px;color:#1b1b1b;">Musik</div>
<div class="t" style="left:336.2px;top:280.4px;color:#6b6b6b;">Lokal gespeichert</div>
<svg class="a" style="left:336.2px;top:291.7px" width="8" height="8" viewBox="0 0 8 8"><path d="M4.6 0.4 L7.6 3.4 L6.8 4.0 L5.9 3.7 L4.4 5.2 L4.5 6.6 L3.9 7.1 L0.9 4.1 L1.4 3.5 L2.8 3.6 L4.3 2.1 L4.0 1.2 Z" fill="#8c949b"/><path d="M2.4 5.6 L0.3 7.7" stroke="#8c949b" stroke-width="0.8"/></svg>
<svg class="a" style="left:454.8px;top:271.9px" width="28" height="22" viewBox="0 0 28 22">
 <defs><linearGradient id="fVideos" x1="0" y1="0" x2="1" y2="1">
  <stop offset="0" stop-color="#b46af6"/><stop offset="1" stop-color="#8844dc"/></linearGradient></defs>
 <path d="M0 1.2 Q0 0 1.2 0 L10.6 0 Q11.4 0 11.9 0.6 L13.6 2.9 L26.8 2.9 Q28 2.9 28 4.1 L28 8 L0 8 Z" fill="#7a3ec6"/>
 <path d="M0 5.2 L28 5.2 L28 20.8 Q28 22 26.8 22 L1.2 22 Q0 22 0 20.8 Z" fill="url(#fVideos)"/>
 <path d="M10.8 8 L10.8 17.9 L18.4 13 Z" fill="#fff"/><g fill="#4a2088"><rect x="1.6" y="6.6" width="2.4" height="2.4" rx="0.5"/><rect x="1.6" y="12.1" width="2.4" height="2.4" rx="0.5"/><rect x="1.6" y="17.3" width="2.4" height="2.4" rx="0.5"/><rect x="23.7" y="6.6" width="2.4" height="2.4" rx="0.5"/><rect x="23.7" y="12.1" width="2.4" height="2.4" rx="0.5"/><rect x="23.7" y="17.3" width="2.4" height="2.4" rx="0.5"/></g>
</svg>
<div class="t" style="left:488.4px;top:269.6px;color:#1b1b1b;">Videos</div>
<div class="t" style="left:488.4px;top:280.4px;color:#6b6b6b;">Lokal gespeichert</div>
<svg class="a" style="left:488.4px;top:291.7px" width="8" height="8" viewBox="0 0 8 8"><path d="M4.6 0.4 L7.6 3.4 L6.8 4.0 L5.9 3.7 L4.4 5.2 L4.5 6.6 L3.9 7.1 L0.9 4.1 L1.4 3.5 L2.8 3.6 L4.3 2.1 L4.0 1.2 Z" fill="#8c949b"/><path d="M2.4 5.6 L0.3 7.7" stroke="#8c949b" stroke-width="0.8"/></svg>
<svg class="a" style="left:284.5px;top:319.5px" width="4" height="6" viewBox="0 0 4 6"><path d="M0.7 0.6 L3.1 3 L0.7 5.4" fill="none" stroke="#888" stroke-width="0.8"/></svg>
<div class="t" style="left:291.9px;top:318.5px;color:#4141a6;">Favoriten</div>
<svg class="a" style="left:284.5px;top:337px" width="4" height="6" viewBox="0 0 4 6"><path d="M0.7 0.6 L3.1 3 L0.7 5.4" fill="none" stroke="#888" stroke-width="0.8"/></svg>
<div class="t" style="left:291.9px;top:336.1px;color:#4141a6;">Neueste</div>
<div class="t" style="left:754px;top:312.9px;color:#5f5f5f;font-size:8.33px">Wählen Sie eine Datei für die Vorschau aus.</div>
<svg class="a" style="left:892px;top:482.5px" width="8" height="9" viewBox="0 0 8 9"><path d="M0 1 L8 1" stroke="#999" stroke-width="1"/><path d="M0 3.5 L8 3.5 M0 6 L8 6 M0 8.3 L8 8.3" stroke="#505050" stroke-width="0.9"/></svg>
<svg class="a" style="left:907px;top:483px" width="8" height="8" viewBox="0 0 8 8"><rect x="0.4" y="0.4" width="7.2" height="6.8" fill="none" stroke="#555" stroke-width="0.8"/><rect x="0" y="6.4" width="8" height="1.4" fill="#555"/></svg>

<!-- taskbar -->
<div class="taskbar"></div>


<!-- weather -->
<svg class="a" style="left:13px;top:551px" width="18" height="18" viewBox="0 0 18 18">
 <defs><linearGradient id="sun" x1="0" y1="0" x2="1" y2="1"><stop offset="0" stop-color="#ffc83a"/><stop offset="1" stop-color="#f59a1a"/></linearGradient>
 <linearGradient id="cl" x1="0" y1="0" x2="0" y2="1"><stop offset="0" stop-color="#e6f0fa"/><stop offset="1" stop-color="#a8c4e4"/></linearGradient></defs>
 <circle cx="8.6" cy="8.4" r="6.8" fill="url(#sun)"/>
 <path d="M5 16.6 Q3 16.6 3 14.4 Q3 12.4 5 12.2 Q5.6 8.6 9.2 8.6 Q12.4 8.6 13.2 11.4 Q16 11.6 16 14.1 Q16 16.6 13.4 16.6 Z" fill="url(#cl)" stroke="#9ec0ea" stroke-width="0.6"/>
</svg>
<div class="a" style="left:21px;top:548.5px;width:10.5px;height:10.5px;border-radius:50%;background:#c42b1c"></div>
<div class="t" style="left:23.6px;top:549.6px;color:#fff;font-size:7.5px;transform:none">1</div>
<div class="t" style="left:34.4px;top:550.6px;color:#1b1b1b;">14°C</div>
<div class="t" style="left:34.4px;top:561.6px;color:#4a4a4a;">Teilw. sonnig</div>

<!-- start -->
<svg class="a" style="left:395.5px;top:552.5px" width="16" height="16" viewBox="0 0 16 16">
 <defs><linearGradient id="ws" x1="0" y1="0" x2="1" y2="1"><stop offset="0" stop-color="#3cc8f8"/><stop offset="1" stop-color="#0a70d6"/></linearGradient></defs>
 <rect x="0" y="0" width="7.5" height="7.5" fill="url(#ws)"/><rect x="8.2" y="0" width="7.5" height="7.5" fill="url(#ws)"/>
 <rect x="0" y="8.2" width="7.5" height="7.5" fill="url(#ws)"/><rect x="8.2" y="8.2" width="7.5" height="7.5" fill="url(#ws)"/>
</svg>
<div class="a" style="left:421px;top:550px;width:65px;height:20px;border-radius:10px;background:#f1f4fb;box-shadow:0 0 0 0.5px rgba(0,0,0,0.04)"></div>
<svg class="a" style="left:436.5px;top:554.5px" width="10" height="11" viewBox="0 0 10 11"><circle cx="4.2" cy="4.3" r="3.3" fill="none" stroke="#2a2a2a" stroke-width="1.1"/><path d="M6.6 6.8 L9.2 9.6" stroke="#2a2a2a" stroke-width="1.2"/></svg>
<div class="t" style="left:449.8px;top:556.5px;color:#1f1f1f;">Suche</div>

<!-- task view -->
<div class="a" style="left:500px;top:552.7px;width:11.7px;height:10.3px;background:#f4f4f4;border-radius:1px"></div>
<div class="a" style="left:496.2px;top:556.5px;width:11.7px;height:10.6px;background:#262626;border-radius:1px"></div>
<div class="a" style="left:500px;top:556.5px;width:7.9px;height:6.5px;background:#b4b4b4"></div>
<!-- explorer -->
<div class="a" style="left:520.5px;top:547.5px;width:25.5px;height:25.7px;border-radius:4px;background:#eef1f9;box-shadow:0 0 0 0.5px rgba(0,0,0,0.05)"></div>
<svg class="a" style="left:524.8px;top:553px" width="17" height="14" viewBox="0 0 17 14">
 <defs><linearGradient id="ex" x1="0" y1="0" x2="0" y2="1"><stop offset="0" stop-color="#ffd860"/><stop offset="1" stop-color="#f8c030"/></linearGradient></defs>
 <path d="M0 0.8 Q0 0 0.8 0 L5.6 0 L7 1.6 L16.2 1.6 Q16.6 1.6 16.6 2.2 L16.6 6 L0 6 Z" fill="#e0a010"/>
 <rect x="0" y="1.8" width="16.6" height="12" rx="0.6" fill="url(#ex)"/>
 <rect x="3.2" y="10" width="10.6" height="3.8" rx="0.8" fill="#0f78d4"/>
</svg>
<div class="a" style="left:528px;top:570.6px;width:10.5px;height:2.4px;border-radius:1.2px;background:#0f6cd0"></div>
<!-- edge -->
<svg class="a" style="left:554px;top:551.5px" width="17" height="17" viewBox="0 0 17 17">
 <defs><linearGradient id="eg" x1="0" y1="0.3" x2="1" y2="0.6"><stop offset="0" stop-color="#1a8ee0"/><stop offset="0.55" stop-color="#2cb8c0"/><stop offset="1" stop-color="#5ad86a"/></linearGradient>
 <linearGradient id="eg2" x1="0" y1="0" x2="1" y2="1"><stop offset="0" stop-color="#0c6ac0"/><stop offset="1" stop-color="#0a4898"/></linearGradient></defs>
 <circle cx="8.5" cy="8.3" r="8.1" fill="url(#eg)"/>
 <path d="M0.4 8.5 Q1 4 6 3.6 Q10.5 3.4 11.5 7.8 L11.5 9 L5.6 9 Q5 13 8.5 15 Q11.8 16.2 15 13.6 Q12.5 16.8 8.4 16.4 Q1 15.8 0.4 8.5 Z" fill="url(#eg2)"/>
 <path d="M5.6 9 L11.5 9 Q11.5 12 9 12.6 Q6 12.8 5.6 9 Z" fill="#f0f4f8"/>
 <rect x="0.6" y="8.6" width="6.2" height="8" rx="1" fill="#d6b8a4"/>
 <circle cx="3.7" cy="11" r="1.8" fill="#c49a80"/>
 <rect x="0.6" y="13.4" width="6.2" height="3.2" fill="#f2f2f2"/>
</svg>
<!-- store -->
<svg class="a" style="left:584px;top:552px" width="16" height="16" viewBox="0 0 16 16">
 <path d="M4.8 3 Q4.8 0.6 8 0.6 Q11.2 0.6 11.2 3" fill="none" stroke="#3ab0e8" stroke-width="1.2"/>
 <rect x="0" y="2.6" width="15.6" height="13.4" rx="1.6" fill="#1f5ba8"/>
 <rect x="5" y="6.1" width="2.8" height="2.8" fill="#f25022"/><rect x="8.4" y="6.1" width="2.8" height="2.8" fill="#7fba00"/>
 <rect x="5" y="9.4" width="2.8" height="2.8" fill="#00a4ef"/><rect x="8.4" y="9.4" width="2.8" height="2.8" fill="#ffb900"/>
</svg>
<!-- 8 ball -->
<svg class="a" style="left:613px;top:551.5px" width="16" height="16" viewBox="0 0 16 16">
 <defs><radialGradient id="bb" cx="0.35" cy="0.3" r="0.8"><stop offset="0" stop-color="#5a5a5a"/><stop offset="1" stop-color="#121212"/></radialGradient></defs>
 <circle cx="8" cy="8" r="7.8" fill="url(#bb)"/>
 <circle cx="8.6" cy="8.8" r="3.2" fill="#e8e8e8"/><circle cx="8.6" cy="8.8" r="1.6" fill="#8a8a8a"/><circle cx="8.6" cy="8.8" r="1" fill="#eee"/>
 <circle cx="4.6" cy="3.8" r="1.1" fill="#ddd"/>
</svg>
<div class="a" style="left:619px;top:571.5px;width:4.4px;height:1.3px;border-radius:1px;background:#6a6a6a"></div>
<!-- tray -->
<svg class="a" style="left:872.5px;top:556.5px" width="9" height="6" viewBox="0 0 9 6"><path d="M0.6 5 L4.5 1 L8.4 5" fill="none" stroke="#2a2a2a" stroke-width="0.9"/></svg>
<svg class="a" style="left:887px;top:554.5px" width="12" height="9" viewBox="0 0 12 9"><path d="M2.6 8.2 Q0.4 8.2 0.4 6.2 Q0.4 4.3 2.4 4.1 Q3.3 0.7 6.4 0.7 Q9 0.7 9.8 3.5 Q11.6 3.8 11.6 5.9 Q11.6 8.2 9.4 8.2 Z" fill="#d8d8d8" stroke="#5a5a5a" stroke-width="0.8"/></svg>
<svg class="a" style="left:905.5px;top:554px" width="12" height="10" viewBox="0 0 12 10">
 <path d="M0.6 3.4 Q6 -1.4 11.4 3.4 M2.2 5.2 Q6 1.8 9.8 5.2 M3.8 7 Q6 5 8.2 7" fill="none" stroke="#2a2a2a" stroke-width="0.9"/><circle cx="6" cy="8.8" r="0.9" fill="#2a2a2a"/></svg>
<svg class="a" style="left:921.5px;top:555px" width="12" height="9" viewBox="0 0 12 9">
 <path d="M0.5 3 L2.6 3 L5.4 0.6 L5.4 8.4 L2.6 6 L0.5 6 Z" fill="none" stroke="#2a2a2a" stroke-width="0.8" stroke-linejoin="round"/>
 <path d="M7.6 3 L10.6 6 M10.6 3 L7.6 6" stroke="#2a2a2a" stroke-width="0.8"/></svg>
<svg class="a" style="left:937.5px;top:554px" width="12" height="10" viewBox="0 0 12 10">
 <rect x="0.5" y="2.5" width="9.6" height="6" rx="0.6" fill="#333" stroke="#2a2a2a" stroke-width="0.6"/><rect x="10.2" y="4.4" width="1.3" height="2.2" fill="#2a2a2a"/>
 <path d="M1.5 0.4 L3.2 2.8 L3.2 2.2" fill="none" stroke="#2a2a2a" stroke-width="0.8"/></svg>
<div class="t" style="left:955px;top:551.3px;width:40.4px;text-align:right;color:#1f1f1f;font-size:7.4px;transform:none">14:42</div>
<div class="t" style="left:950px;top:561.3px;width:45.4px;text-align:right;color:#1f1f1f;font-size:7.4px;transform:none">09.11.2022</div>
<div class="a" style="left:1000.8px;top:555px;width:10.2px;height:10.2px;border-radius:50%;background:#0f62c8"></div>
<div class="t" style="left:1001px;top:557px;width:10px;text-align:center;color:#fff;font-size:6.5px;font-weight:bold;transform:none">11</div>

</body></html>
